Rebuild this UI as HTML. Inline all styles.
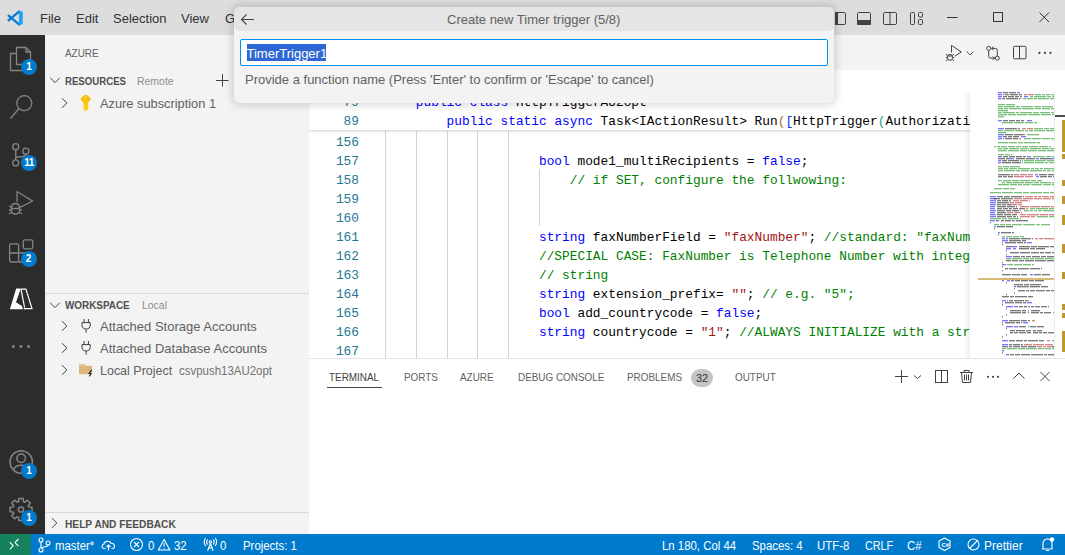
<!DOCTYPE html>
<html><head><meta charset="utf-8">
<style>
*{margin:0;padding:0;box-sizing:border-box}
html,body{width:1065px;height:555px;overflow:hidden;background:#fff;font-family:"Liberation Sans",sans-serif;font-size:13px;color:#616161}
.a{position:absolute;white-space:pre}
svg.a{overflow:visible}
#title{left:0;top:0;width:1065px;height:35px;background:#dddddd}
#act{left:0;top:35px;width:45px;height:499px;background:#2c2c2c}
#side{left:45px;top:35px;width:264px;height:499px;background:#f3f3f3}
#tabs{left:309px;top:35px;width:756px;height:35px;background:#f3f3f3}
#status{left:0;top:534px;width:1065px;height:21px;background:#007acc}
#remote{left:0;top:534px;width:31px;height:21px;background:#16825d}
.menu{top:11px;font-size:13px;color:#333;line-height:15px}
.mono{font-family:"Liberation Mono",monospace;font-size:12.833px;line-height:19px}
.ln{color:#237893;text-align:right;width:50px;left:309px}
.code{left:385px}
.kw{color:#0000ff}
.cm{color:#008000}
.st{color:#a31515}
.id{color:#000}
.br0{color:#a9740f}
.br{color:#0431fa}
.br2{color:#319c8c}
.g{position:absolute;width:1px;background:#d3d3d3}
.badge{position:absolute;width:16px;height:16px;border-radius:8px;background:#007acc;color:#fff;font-size:10px;font-weight:bold;text-align:center;line-height:16px}
.sb{color:#fff;font-size:12px;top:539px;line-height:14px;transform:scaleX(0.95);transform-origin:0 0}
.ptab{top:371px;font-size:11px;color:#616161;line-height:13px;transform:scaleX(0.9);transform-origin:0 0}
.sec{font-size:11px;font-weight:bold;color:#4f4f4f;line-height:13px;transform:scaleX(0.9);transform-origin:0 0}
.desc{font-size:11px;color:#8e8e8e;line-height:13px;transform:scaleX(0.95);transform-origin:0 0}
.item{font-size:13px;color:#616161;line-height:15px}
</style></head><body>
<div class="a" id="title"></div>
<div class="a" id="act"></div>
<div class="a" id="side"></div>
<div class="a" id="tabs"></div>
<div class="a" id="status"></div>
<div class="a" id="remote"></div>

<!-- ===== title bar ===== -->
<svg class="a" style="left:4px;top:7px" width="24" height="22">
<g stroke="#0b7bd3" stroke-width="2.3" stroke-linecap="butt">
<line x1="3.9" y1="8.2" x2="15.6" y2="17.9"/>
<line x1="3.9" y1="13.8" x2="15.6" y2="4.1"/>
</g>
<path d="M14.9 3.2 L18.8 4.9 V16.9 L14.9 18.7 Z" fill="#23a4f2"/>
</svg>
<div class="a menu" style="left:40px">File</div>
<div class="a menu" style="left:76px">Edit</div>
<div class="a menu" style="left:113px">Selection</div>
<div class="a menu" style="left:181px">View</div>
<div class="a menu" style="left:225px">G</div>

<!-- layout controls -->
<svg class="a" style="left:829px;top:11px" width="100" height="16">
 <g fill="none" stroke="#424242" stroke-width="1">
  <rect x="6.5" y="1.5" width="10" height="12" rx="1.2"/>
  <rect x="28.5" y="1.5" width="13" height="12" rx="1.2"/>
  <rect x="54.5" y="1.5" width="13" height="12" rx="1.2"/><line x1="61" y1="1.5" x2="61" y2="13.5"/>
  <rect x="81.5" y="1.5" width="4" height="12" rx="1"/><rect x="89.5" y="1.5" width="4" height="4.5" rx="1"/><rect x="89.5" y="8.5" width="4" height="5" rx="1"/>
 </g>
 <rect x="6" y="1" width="3" height="13" fill="#424242"/>
 <rect x="28" y="9" width="14" height="5" rx="1" fill="#424242"/>
</svg>
<!-- window controls -->
<svg class="a" style="left:940px;top:8px" width="125" height="20">
 <g fill="none" stroke="#333" stroke-width="1">
  <line x1="7" y1="9.5" x2="17.5" y2="9.5"/>
  <rect x="53.5" y="4.5" width="9" height="9"/>
  <line x1="99.5" y1="4.5" x2="109" y2="14"/><line x1="109" y1="4.5" x2="99.5" y2="14"/>
 </g>
</svg>

<!-- ===== activity bar ===== -->
<svg class="a" style="left:0;top:35px" width="45" height="499">
 <g fill="none" stroke="#858585" stroke-width="1.3">
  <!-- explorer -->
  <path d="M16.5 12.5 H26 L30.5 17 V29.5 H16.5 Z M26 12.5 V17 H30.5"/>
  <path d="M16.5 18.5 H10.5 V35.5 H24.5 V29.5"/>
  <!-- search -->
  <circle cx="24.3" cy="68.2" r="7.5"/>
  <line x1="19" y1="73.5" x2="10.5" y2="83.5"/>
  <!-- scm -->
  <circle cx="15.7" cy="111.7" r="3"/><circle cx="25.9" cy="116.2" r="3"/><circle cx="15.7" cy="127.9" r="3"/>
  <line x1="15.7" y1="114.7" x2="15.7" y2="124.9"/>
  <path d="M25.9 119.2 C25.9 122 22 122 15.7 122"/>
  <!-- run -->
  <path d="M17 156.5 L32.4 166 L21 172"/><line x1="17" y1="156.5" x2="17" y2="167"/>
  <path d="M11.5 173 C11.5 167 19.5 167 19.5 173 V176 C19.5 180 11.5 180 11.5 176 Z"/>
  <path d="M9 171 L11.5 172.5 M22 171 L19.5 172.5 M9 175 H11.5 M19.5 175 H22 M9 179 L11.5 177.5 M22 179 L19.5 177.5 M11.5 173.5 H19.5"/>
  <!-- extensions -->
  <rect x="9.6" y="208.8" width="9" height="18.2" rx="1.5"/>
  <path d="M9.6 218 H27.5 V227 H18.6"/>
  <rect x="23.3" y="204.8" width="9.5" height="9" rx="1.5"/>
  <!-- account -->
  <circle stroke-width="1.5" cx="21.2" cy="427" r="11.2"/>
  <circle stroke-width="1.5" cx="21.2" cy="423.3" r="4.3"/>
  <path stroke-width="1.5" d="M13.6 434.8 C15.5 428.8 26.9 428.8 28.8 434.8"/>
  <!-- gear -->
  <path stroke-width="1.5" stroke-linejoin="round" d="M18.58 466.67 L18.77 463.52 L23.23 463.52 L23.42 466.67 L24.83 467.25 L27.19 465.16 L30.34 468.31 L28.25 470.67 L28.83 472.08 L31.98 472.27 L31.98 476.73 L28.83 476.92 L28.25 478.33 L30.34 480.69 L27.19 483.84 L24.83 481.75 L23.42 482.33 L23.23 485.48 L18.77 485.48 L18.58 482.33 L17.17 481.75 L14.81 483.84 L11.66 480.69 L13.75 478.33 L13.17 476.92 L10.02 476.73 L10.02 472.27 L13.17 472.08 L13.75 470.67 L11.66 468.31 L14.81 465.16 L17.17 467.25 Z"/>
  <circle stroke-width="1.5" cx="21" cy="474.5" r="2.6"/>
 </g>
 <!-- azure -->
 <path d="M9.9 274.2 L16.2 253.5 L20.8 253.5 L16 267.2 L21.8 271 L23 274.2 Z" fill="#fff"/>
 <path d="M21 254.1 L25.9 254.1 L32 273.6 L23.8 273.6 M21 254.1 L24.6 272.5" fill="none" stroke="#fff" stroke-width="1.2"/>
 <!-- more -->
 <g fill="#858585"><circle cx="13.3" cy="311.5" r="1.5"/><circle cx="21" cy="311.5" r="1.5"/><circle cx="28.6" cy="311.5" r="1.5"/></g>
</svg>
<div class="badge" style="left:21px;top:23px;top:58.5px">1</div>
<div class="badge" style="left:21px;top:155px;letter-spacing:-0.6px">11</div>
<div class="badge" style="left:20.5px;top:251px">2</div>
<div class="badge" style="left:21px;top:462.5px">1</div>
<div class="badge" style="left:21px;top:510px">1</div>

<!-- ===== sidebar ===== -->
<div class="a" style="left:65px;top:47px;font-size:11px;color:#616161;line-height:13px;transform:scaleX(0.9);transform-origin:0 0">AZURE</div>
<svg class="a" style="left:49px;top:74px" width="12" height="12"><path d="M1.2 3.8 L6 8.6 L10.8 3.8" fill="none" stroke="#424242" stroke-width="1"/></svg>
<div class="a sec" style="left:65px;top:75px;transform:scaleX(0.875)">RESOURCES</div>
<div class="a desc" style="left:137px;top:75px">Remote</div>
<svg class="a" style="left:215px;top:73px" width="14" height="14"><path d="M7.5 1 V13.5 M1 7.5 H13.5" fill="none" stroke="#424242" stroke-width="1"/></svg>
<svg class="a" style="left:60px;top:97px" width="10" height="12"><path d="M2 1.2 L6.8 6 L2 10.8" fill="none" stroke="#424242" stroke-width="1"/></svg>
<svg class="a" style="left:78px;top:95px" width="14" height="18"><defs><linearGradient id="kg" x1="0" y1="0" x2="0" y2="1"><stop offset="0" stop-color="#f9b600"/><stop offset="1" stop-color="#ffd21a"/></linearGradient></defs><path d="M6.3 0 H9.1 L12.7 3.4 V4.8 L9.9 7.8 V9.4 L10.9 10.2 L9.9 11 V11.8 L10.9 12.6 L9.9 13.4 V14.8 L7.7 16 L5.6 14.8 V7.8 L2.7 4.8 V3.4 Z" fill="url(#kg)"/><circle cx="7.6" cy="2.4" r="0.9" fill="#fff4c0"/></svg>
<div class="a item" style="left:100px;top:96px;transform:scaleX(0.985);transform-origin:0 0">Azure subscription 1</div>

<div class="a" style="left:45px;top:293px;width:264px;height:1px;background:#d9d9d9"></div>
<svg class="a" style="left:49px;top:299px" width="12" height="12"><path d="M1.2 3.8 L6 8.6 L10.8 3.8" fill="none" stroke="#424242" stroke-width="1"/></svg>
<div class="a sec" style="left:65px;top:299px">WORKSPACE</div>
<div class="a desc" style="left:142px;top:299px">Local</div>

<svg class="a" style="left:60px;top:320px" width="10" height="12"><path d="M2 1.2 L6.8 6 L2 10.8" fill="none" stroke="#424242" stroke-width="1"/></svg>
<svg class="a" style="left:80px;top:318px" width="12" height="16"><path d="M4.1 1 V4.6 M8.4 1 V4.6 M2 4.6 H10.2 V7.6 C10.2 9.8 8.4 11 6.1 11 C3.8 11 2 9.8 2 7.6 Z M6.1 11 V14.6" fill="none" stroke="#3b3b45" stroke-width="1"/></svg>
<div class="a item" style="left:100px;top:319px">Attached Storage Accounts</div>
<svg class="a" style="left:60px;top:342px" width="10" height="12"><path d="M2 1.2 L6.8 6 L2 10.8" fill="none" stroke="#424242" stroke-width="1"/></svg>
<svg class="a" style="left:80px;top:340px" width="12" height="16"><path d="M4.1 1 V4.6 M8.4 1 V4.6 M2 4.6 H10.2 V7.6 C10.2 9.8 8.4 11 6.1 11 C3.8 11 2 9.8 2 7.6 Z M6.1 11 V14.6" fill="none" stroke="#3b3b45" stroke-width="1"/></svg>
<div class="a item" style="left:100px;top:341px">Attached Database Accounts</div>
<svg class="a" style="left:60px;top:364px" width="10" height="12"><path d="M2 1.2 L6.8 6 L2 10.8" fill="none" stroke="#424242" stroke-width="1"/></svg>
<svg class="a" style="left:79px;top:364px" width="16" height="14"><path d="M0 0.2 H6 L7.2 1.8 H13 V10.2 H0 Z" fill="#dcb67a"/><path d="M0.5 1 H5.8 V1.8 H0.5 Z" fill="#ead2a4"/><path d="M9.5 8 H14 V12.5 H9.5 Z" fill="#f3f3f3"/><path d="M12.8 5.8 L10 9.4 H12.2 L10.3 12.4" fill="none" stroke="#2b2b2b" stroke-width="1.2"/></svg>
<div class="a item" style="left:100px;top:363px;transform:scaleX(0.96);transform-origin:0 0">Local Project</div>
<div class="a" style="left:179px;top:364px;font-size:12px;color:#717171;line-height:14px;transform:scaleX(0.955);transform-origin:0 0">csvpush13AU2opt</div>

<div class="a" style="left:45px;top:512px;width:264px;height:1px;background:#d9d9d9"></div>
<svg class="a" style="left:50px;top:517px" width="10" height="12"><path d="M2 1.2 L6.8 6 L2 10.8" fill="none" stroke="#424242" stroke-width="1"/></svg>
<div class="a sec" style="left:65px;top:518px;transform:scaleX(0.925)">HELP AND FEEDBACK</div>

<!-- ===== editor title actions ===== -->
<svg class="a" style="left:940px;top:40px" width="125" height="26">
 <g fill="none" stroke="#424242" stroke-width="1">
  <path d="M11.5 5.3 L21.3 12 L14.8 16.2"/><line x1="11.5" y1="5.3" x2="11.5" y2="12.5"/>
  <ellipse cx="10" cy="17.4" rx="2.6" ry="3"/><path d="M6 14.2 L7.6 15.4 M14 14.2 L12.4 15.4 M5.8 17.6 H7.4 M12.6 17.6 H14.2 M6 20.8 L7.6 19.6 M14 20.8 L12.4 19.6 M7.6 16 H12.4"/>
  <path d="M26.8 11.6 L30.1 14.9 L33.4 11.6"/>
  <circle cx="48.7" cy="8.4" r="2"/><circle cx="57.3" cy="18.1" r="2"/>
  <path d="M48.7 10.4 V16.3 Q48.7 18.1 50.5 18.1 H54.5 M52.8 16.3 L54.6 18.1 L52.8 19.9"/>
  <path d="M57.3 16.1 V10.2 Q57.3 8.4 55.5 8.4 H51.6 M53.4 6.6 L51.6 8.4 L53.4 10.2"/>
  <rect x="73.5" y="6.3" width="12.5" height="12.5" rx="1"/><line x1="79.5" y1="6.3" x2="79.5" y2="18.8"/>
 </g>
 <g fill="#424242"><circle cx="99.4" cy="12.9" r="1.1"/><circle cx="104.9" cy="12.9" r="1.1"/><circle cx="110.4" cy="12.9" r="1.1"/></g>
</svg>

<!-- ===== editor ===== -->
<div class="g" style="left:385px;top:130px;height:228px"></div>
<div class="g" style="left:416px;top:130px;height:228px"></div>
<div class="g" style="left:447px;top:130px;height:228px"></div>
<div class="g" style="left:477px;top:130px;height:228px"></div>
<div class="g" style="left:508px;top:130px;height:228px"></div>
<div class="g" style="left:539px;top:169px;height:57px"></div>
<div class="a mono ln" style="top:133px">156</div><div class="a mono code" style="top:133px;width:585px;height:19px;overflow:hidden"></div>
<div class="a mono ln" style="top:152px">157</div><div class="a mono code" style="top:152px;width:585px;height:19px;overflow:hidden"><span class="id">                    </span><span class="kw">bool</span><span class="id"> mode1_multiRecipients = </span><span class="kw">false</span><span class="id">;</span></div>
<div class="a mono ln" style="top:171px">158</div><div class="a mono code" style="top:171px;width:585px;height:19px;overflow:hidden"><span class="id">                        </span><span class="cm">// if SET, configure the follwowing:</span></div>
<div class="a mono ln" style="top:190px">159</div><div class="a mono code" style="top:190px;width:585px;height:19px;overflow:hidden"></div>
<div class="a mono ln" style="top:209px">160</div><div class="a mono code" style="top:209px;width:585px;height:19px;overflow:hidden"></div>
<div class="a mono ln" style="top:228px">161</div><div class="a mono code" style="top:228px;width:585px;height:19px;overflow:hidden"><span class="id">                    </span><span class="kw">string</span><span class="id"> faxNumberField = </span><span class="st">&quot;faxNumber&quot;</span><span class="id">; </span><span class="cm">//standard: &quot;faxNumber&quot;</span></div>
<div class="a mono ln" style="top:247px">162</div><div class="a mono code" style="top:247px;width:585px;height:19px;overflow:hidden"><span class="id">                    </span><span class="cm">//SPECIAL CASE: FaxNumber is Telephone Number with integer</span></div>
<div class="a mono ln" style="top:266px">163</div><div class="a mono code" style="top:266px;width:585px;height:19px;overflow:hidden"><span class="id">                    </span><span class="cm">// string</span></div>
<div class="a mono ln" style="top:285px">164</div><div class="a mono code" style="top:285px;width:585px;height:19px;overflow:hidden"><span class="id">                    </span><span class="kw">string</span><span class="id"> extension_prefix= </span><span class="st">&quot;&quot;</span><span class="id">; </span><span class="cm">// e.g. &quot;5&quot;;</span></div>
<div class="a mono ln" style="top:304px">165</div><div class="a mono code" style="top:304px;width:585px;height:19px;overflow:hidden"><span class="id">                    </span><span class="kw">bool</span><span class="id"> add_countrycode = </span><span class="kw">false</span><span class="id">;</span></div>
<div class="a mono ln" style="top:323px">166</div><div class="a mono code" style="top:323px;width:585px;height:19px;overflow:hidden"><span class="id">                    </span><span class="kw">string</span><span class="id"> countrycode = </span><span class="st">&quot;1&quot;</span><span class="id">; </span><span class="cm">//ALWAYS INITIALIZE with a string</span></div>
<div class="a mono ln" style="top:342px">167</div><div class="a mono code" style="top:342px;width:585px;height:19px;overflow:hidden"></div>
<div class="a" style="left:309px;top:92px;width:661px;height:38px;background:#fff;box-shadow:0 3px 2px -1px rgba(0,0,0,0.10)"></div>
<div class="a" style="left:309px;top:130px;width:661px;height:1px;background:#dedede"></div>
<div class="a mono ln" style="top:93px">79</div><div class="a mono code" style="top:93px;width:585px;height:19px;overflow:hidden"><span class="id">    </span><span class="kw">public</span><span class="id"> </span><span class="kw">class</span><span class="id"> HttpTriggerAU2opt</span></div>
<div class="a mono ln" style="top:112px">89</div><div class="a mono code" style="top:112px;width:585px;height:19px;overflow:hidden"><span class="id">        </span><span class="kw">public</span><span class="id"> </span><span class="kw">static</span><span class="id"> </span><span class="kw">async</span><span class="id"> Task&lt;IActionResult&gt; Run</span><span class="br0">(</span><span class="br">[</span><span class="id">HttpTrigger</span><span class="br2">(</span><span class="id">AuthorizationLevel</span></div>
<div class="a" style="left:963px;top:92px;width:7px;height:266px;background:linear-gradient(to right,rgba(0,0,0,0),rgba(0,0,0,0.06))"></div>
<svg class="a" style="left:975px;top:92px" width="80" height="266" shape-rendering="crispEdges"><defs><pattern id="tx" width="2" height="2" patternUnits="userSpaceOnUse"><rect x="1" y="0" width="1" height="2" fill="#fff" fill-opacity="0.35"/><rect x="0" y="1" width="2" height="1" fill="#fff" fill-opacity="0.2"/></pattern></defs><rect x="23" y="0" width="4" height="1" fill="#2020ff" fill-opacity="0.60"/><rect x="23" y="1" width="4" height="1" fill="#2020ff" fill-opacity="0.21"/><rect x="28" y="0" width="5" height="1" fill="#202020" fill-opacity="0.60"/><rect x="28" y="1" width="5" height="1" fill="#202020" fill-opacity="0.21"/><rect x="34" y="0" width="7" height="1" fill="#202020" fill-opacity="0.60"/><rect x="34" y="1" width="7" height="1" fill="#202020" fill-opacity="0.21"/><rect x="42" y="0" width="3" height="1" fill="#2020ff" fill-opacity="0.60"/><rect x="42" y="1" width="3" height="1" fill="#2020ff" fill-opacity="0.21"/><rect x="23" y="2" width="4" height="1" fill="#2020ff" fill-opacity="0.60"/><rect x="23" y="3" width="4" height="1" fill="#2020ff" fill-opacity="0.21"/><rect x="28" y="2" width="1" height="1" fill="#2020ff" fill-opacity="0.60"/><rect x="28" y="3" width="1" height="1" fill="#2020ff" fill-opacity="0.21"/><rect x="30" y="2" width="4" height="1" fill="#202020" fill-opacity="0.60"/><rect x="30" y="3" width="4" height="1" fill="#202020" fill-opacity="0.21"/><rect x="35" y="2" width="8" height="1" fill="#202020" fill-opacity="0.60"/><rect x="35" y="3" width="8" height="1" fill="#202020" fill-opacity="0.21"/><rect x="44" y="2" width="3" height="1" fill="#202020" fill-opacity="0.60"/><rect x="44" y="3" width="3" height="1" fill="#202020" fill-opacity="0.21"/><rect x="49" y="2" width="3" height="1" fill="#b02020" fill-opacity="0.55"/><rect x="49" y="3" width="3" height="1" fill="#b02020" fill-opacity="0.19"/><rect x="53" y="2" width="6" height="1" fill="#b02020" fill-opacity="0.55"/><rect x="53" y="3" width="6" height="1" fill="#b02020" fill-opacity="0.19"/><rect x="60" y="2" width="6" height="1" fill="#108a10" fill-opacity="0.55"/><rect x="60" y="3" width="6" height="1" fill="#108a10" fill-opacity="0.19"/><rect x="67" y="2" width="3" height="1" fill="#108a10" fill-opacity="0.55"/><rect x="67" y="3" width="3" height="1" fill="#108a10" fill-opacity="0.19"/><rect x="71" y="2" width="4" height="1" fill="#108a10" fill-opacity="0.55"/><rect x="71" y="3" width="4" height="1" fill="#108a10" fill-opacity="0.19"/><rect x="76" y="2" width="3" height="1" fill="#108a10" fill-opacity="0.55"/><rect x="76" y="3" width="3" height="1" fill="#108a10" fill-opacity="0.19"/><rect x="23" y="4" width="4" height="1" fill="#2020ff" fill-opacity="0.60"/><rect x="23" y="5" width="4" height="1" fill="#2020ff" fill-opacity="0.21"/><rect x="28" y="4" width="4" height="1" fill="#202020" fill-opacity="0.60"/><rect x="28" y="5" width="4" height="1" fill="#202020" fill-opacity="0.21"/><rect x="33" y="4" width="6" height="1" fill="#202020" fill-opacity="0.60"/><rect x="33" y="5" width="6" height="1" fill="#202020" fill-opacity="0.21"/><rect x="40" y="4" width="4" height="1" fill="#202020" fill-opacity="0.60"/><rect x="40" y="5" width="4" height="1" fill="#202020" fill-opacity="0.21"/><rect x="45" y="4" width="2" height="1" fill="#202020" fill-opacity="0.60"/><rect x="45" y="5" width="2" height="1" fill="#202020" fill-opacity="0.21"/><rect x="49" y="4" width="4" height="1" fill="#2020ff" fill-opacity="0.60"/><rect x="49" y="5" width="4" height="1" fill="#2020ff" fill-opacity="0.21"/><rect x="55" y="4" width="3" height="1" fill="#108a10" fill-opacity="0.55"/><rect x="55" y="5" width="3" height="1" fill="#108a10" fill-opacity="0.19"/><rect x="59" y="4" width="12" height="1" fill="#108a10" fill-opacity="0.55"/><rect x="59" y="5" width="12" height="1" fill="#108a10" fill-opacity="0.19"/><rect x="72" y="4" width="4" height="1" fill="#108a10" fill-opacity="0.55"/><rect x="72" y="5" width="4" height="1" fill="#108a10" fill-opacity="0.19"/><rect x="77" y="4" width="2" height="1" fill="#108a10" fill-opacity="0.55"/><rect x="77" y="5" width="2" height="1" fill="#108a10" fill-opacity="0.19"/><rect x="23" y="6" width="3" height="1" fill="#2020ff" fill-opacity="0.60"/><rect x="23" y="7" width="3" height="1" fill="#2020ff" fill-opacity="0.21"/><rect x="27" y="6" width="3" height="1" fill="#202020" fill-opacity="0.60"/><rect x="27" y="7" width="3" height="1" fill="#202020" fill-opacity="0.21"/><rect x="31" y="6" width="12" height="1" fill="#202020" fill-opacity="0.60"/><rect x="31" y="7" width="12" height="1" fill="#202020" fill-opacity="0.21"/><rect x="44" y="6" width="1" height="1" fill="#202020" fill-opacity="0.60"/><rect x="44" y="7" width="1" height="1" fill="#202020" fill-opacity="0.21"/><rect x="45" y="6" width="1" height="1" fill="#108080" fill-opacity="0.55"/><rect x="45" y="7" width="1" height="1" fill="#108080" fill-opacity="0.19"/><rect x="48" y="6" width="3" height="1" fill="#108a10" fill-opacity="0.55"/><rect x="48" y="7" width="3" height="1" fill="#108a10" fill-opacity="0.19"/><rect x="52" y="6" width="6" height="1" fill="#108a10" fill-opacity="0.55"/><rect x="52" y="7" width="6" height="1" fill="#108a10" fill-opacity="0.19"/><rect x="59" y="6" width="3" height="1" fill="#108a10" fill-opacity="0.55"/><rect x="59" y="7" width="3" height="1" fill="#108a10" fill-opacity="0.19"/><rect x="63" y="6" width="11" height="1" fill="#108a10" fill-opacity="0.55"/><rect x="63" y="7" width="11" height="1" fill="#108a10" fill-opacity="0.19"/><rect x="75" y="6" width="4" height="1" fill="#108a10" fill-opacity="0.55"/><rect x="75" y="7" width="4" height="1" fill="#108a10" fill-opacity="0.19"/><rect x="23" y="12" width="7" height="1" fill="#108a10" fill-opacity="0.55"/><rect x="23" y="13" width="7" height="1" fill="#108a10" fill-opacity="0.19"/><rect x="31" y="12" width="9" height="1" fill="#108a10" fill-opacity="0.55"/><rect x="31" y="13" width="9" height="1" fill="#108a10" fill-opacity="0.19"/><rect x="23" y="14" width="5" height="1" fill="#108a10" fill-opacity="0.55"/><rect x="23" y="15" width="5" height="1" fill="#108a10" fill-opacity="0.19"/><rect x="29" y="14" width="11" height="1" fill="#108a10" fill-opacity="0.55"/><rect x="29" y="15" width="11" height="1" fill="#108a10" fill-opacity="0.19"/><rect x="41" y="14" width="4" height="1" fill="#108a10" fill-opacity="0.55"/><rect x="41" y="15" width="4" height="1" fill="#108a10" fill-opacity="0.19"/><rect x="46" y="14" width="12" height="1" fill="#108a10" fill-opacity="0.55"/><rect x="46" y="15" width="12" height="1" fill="#108a10" fill-opacity="0.19"/><rect x="59" y="14" width="7" height="1" fill="#108a10" fill-opacity="0.55"/><rect x="59" y="15" width="7" height="1" fill="#108a10" fill-opacity="0.19"/><rect x="67" y="14" width="11" height="1" fill="#108a10" fill-opacity="0.55"/><rect x="67" y="15" width="11" height="1" fill="#108a10" fill-opacity="0.19"/><rect x="23" y="16" width="5" height="1" fill="#108a10" fill-opacity="0.55"/><rect x="23" y="17" width="5" height="1" fill="#108a10" fill-opacity="0.19"/><rect x="29" y="16" width="4" height="1" fill="#108a10" fill-opacity="0.55"/><rect x="29" y="17" width="4" height="1" fill="#108a10" fill-opacity="0.19"/><rect x="34" y="16" width="12" height="1" fill="#108a10" fill-opacity="0.55"/><rect x="34" y="17" width="12" height="1" fill="#108a10" fill-opacity="0.19"/><rect x="47" y="16" width="12" height="1" fill="#108a10" fill-opacity="0.55"/><rect x="47" y="17" width="12" height="1" fill="#108a10" fill-opacity="0.19"/><rect x="60" y="16" width="6" height="1" fill="#108a10" fill-opacity="0.55"/><rect x="60" y="17" width="6" height="1" fill="#108a10" fill-opacity="0.19"/><rect x="67" y="16" width="8" height="1" fill="#108a10" fill-opacity="0.55"/><rect x="67" y="17" width="8" height="1" fill="#108a10" fill-opacity="0.19"/><rect x="76" y="16" width="3" height="1" fill="#108a10" fill-opacity="0.55"/><rect x="76" y="17" width="3" height="1" fill="#108a10" fill-opacity="0.19"/><rect x="23" y="18" width="10" height="1" fill="#108a10" fill-opacity="0.55"/><rect x="23" y="19" width="10" height="1" fill="#108a10" fill-opacity="0.19"/><rect x="23" y="20" width="4" height="1" fill="#108a10" fill-opacity="0.55"/><rect x="23" y="21" width="4" height="1" fill="#108a10" fill-opacity="0.19"/><rect x="28" y="20" width="12" height="1" fill="#108a10" fill-opacity="0.55"/><rect x="28" y="21" width="12" height="1" fill="#108a10" fill-opacity="0.19"/><rect x="41" y="20" width="3" height="1" fill="#108a10" fill-opacity="0.55"/><rect x="41" y="21" width="3" height="1" fill="#108a10" fill-opacity="0.19"/><rect x="45" y="20" width="12" height="1" fill="#108a10" fill-opacity="0.55"/><rect x="45" y="21" width="12" height="1" fill="#108a10" fill-opacity="0.19"/><rect x="58" y="20" width="6" height="1" fill="#108a10" fill-opacity="0.55"/><rect x="58" y="21" width="6" height="1" fill="#108a10" fill-opacity="0.19"/><rect x="65" y="20" width="10" height="1" fill="#108a10" fill-opacity="0.55"/><rect x="65" y="21" width="10" height="1" fill="#108a10" fill-opacity="0.19"/><rect x="76" y="20" width="3" height="1" fill="#108a10" fill-opacity="0.55"/><rect x="76" y="21" width="3" height="1" fill="#108a10" fill-opacity="0.19"/><rect x="23" y="22" width="9" height="1" fill="#108a10" fill-opacity="0.55"/><rect x="23" y="23" width="9" height="1" fill="#108a10" fill-opacity="0.19"/><rect x="33" y="22" width="8" height="1" fill="#108a10" fill-opacity="0.55"/><rect x="33" y="23" width="8" height="1" fill="#108a10" fill-opacity="0.19"/><rect x="42" y="22" width="10" height="1" fill="#108a10" fill-opacity="0.55"/><rect x="42" y="23" width="10" height="1" fill="#108a10" fill-opacity="0.19"/><rect x="53" y="22" width="12" height="1" fill="#108a10" fill-opacity="0.55"/><rect x="53" y="23" width="12" height="1" fill="#108a10" fill-opacity="0.19"/><rect x="66" y="22" width="10" height="1" fill="#108a10" fill-opacity="0.55"/><rect x="66" y="23" width="10" height="1" fill="#108a10" fill-opacity="0.19"/><rect x="77" y="22" width="2" height="1" fill="#108a10" fill-opacity="0.55"/><rect x="77" y="23" width="2" height="1" fill="#108a10" fill-opacity="0.19"/><rect x="23" y="24" width="6" height="1" fill="#108a10" fill-opacity="0.55"/><rect x="23" y="25" width="6" height="1" fill="#108a10" fill-opacity="0.19"/><rect x="23" y="28" width="4" height="1" fill="#2020ff" fill-opacity="0.60"/><rect x="23" y="29" width="4" height="1" fill="#2020ff" fill-opacity="0.21"/><rect x="28" y="28" width="5" height="1" fill="#202020" fill-opacity="0.60"/><rect x="28" y="29" width="5" height="1" fill="#202020" fill-opacity="0.21"/><rect x="34" y="28" width="6" height="1" fill="#202020" fill-opacity="0.60"/><rect x="34" y="29" width="6" height="1" fill="#202020" fill-opacity="0.21"/><rect x="41" y="28" width="4" height="1" fill="#202020" fill-opacity="0.60"/><rect x="41" y="29" width="4" height="1" fill="#202020" fill-opacity="0.21"/><rect x="46" y="28" width="3" height="1" fill="#202020" fill-opacity="0.60"/><rect x="46" y="29" width="3" height="1" fill="#202020" fill-opacity="0.21"/><rect x="52" y="28" width="5" height="1" fill="#2020ff" fill-opacity="0.60"/><rect x="52" y="29" width="5" height="1" fill="#2020ff" fill-opacity="0.21"/><rect x="27" y="30" width="11" height="1" fill="#108a10" fill-opacity="0.55"/><rect x="27" y="31" width="11" height="1" fill="#108a10" fill-opacity="0.19"/><rect x="39" y="30" width="10" height="1" fill="#108a10" fill-opacity="0.55"/><rect x="39" y="31" width="10" height="1" fill="#108a10" fill-opacity="0.19"/><rect x="50" y="30" width="8" height="1" fill="#108a10" fill-opacity="0.55"/><rect x="50" y="31" width="8" height="1" fill="#108a10" fill-opacity="0.19"/><rect x="59" y="30" width="3" height="1" fill="#108a10" fill-opacity="0.55"/><rect x="59" y="31" width="3" height="1" fill="#108a10" fill-opacity="0.19"/><rect x="23" y="36" width="6" height="1" fill="#2020ff" fill-opacity="0.60"/><rect x="23" y="37" width="6" height="1" fill="#2020ff" fill-opacity="0.21"/><rect x="30" y="36" width="12" height="1" fill="#202020" fill-opacity="0.60"/><rect x="30" y="37" width="12" height="1" fill="#202020" fill-opacity="0.21"/><rect x="43" y="36" width="2" height="1" fill="#202020" fill-opacity="0.60"/><rect x="43" y="37" width="2" height="1" fill="#202020" fill-opacity="0.21"/><rect x="47" y="36" width="4" height="1" fill="#b02020" fill-opacity="0.55"/><rect x="47" y="37" width="4" height="1" fill="#b02020" fill-opacity="0.19"/><rect x="52" y="36" width="6" height="1" fill="#b02020" fill-opacity="0.55"/><rect x="52" y="37" width="6" height="1" fill="#b02020" fill-opacity="0.19"/><rect x="59" y="36" width="9" height="1" fill="#108a10" fill-opacity="0.55"/><rect x="59" y="37" width="9" height="1" fill="#108a10" fill-opacity="0.19"/><rect x="69" y="36" width="5" height="1" fill="#108a10" fill-opacity="0.55"/><rect x="69" y="37" width="5" height="1" fill="#108a10" fill-opacity="0.19"/><rect x="75" y="36" width="4" height="1" fill="#108a10" fill-opacity="0.55"/><rect x="75" y="37" width="4" height="1" fill="#108a10" fill-opacity="0.19"/><rect x="23" y="38" width="5" height="1" fill="#108a10" fill-opacity="0.55"/><rect x="23" y="39" width="5" height="1" fill="#108a10" fill-opacity="0.19"/><rect x="29" y="38" width="10" height="1" fill="#108a10" fill-opacity="0.55"/><rect x="29" y="39" width="10" height="1" fill="#108a10" fill-opacity="0.19"/><rect x="40" y="38" width="9" height="1" fill="#108a10" fill-opacity="0.55"/><rect x="40" y="39" width="9" height="1" fill="#108a10" fill-opacity="0.19"/><rect x="50" y="38" width="3" height="1" fill="#108a10" fill-opacity="0.55"/><rect x="50" y="39" width="3" height="1" fill="#108a10" fill-opacity="0.19"/><rect x="54" y="38" width="4" height="1" fill="#108a10" fill-opacity="0.55"/><rect x="54" y="39" width="4" height="1" fill="#108a10" fill-opacity="0.19"/><rect x="59" y="38" width="11" height="1" fill="#108a10" fill-opacity="0.55"/><rect x="59" y="39" width="11" height="1" fill="#108a10" fill-opacity="0.19"/><rect x="71" y="38" width="8" height="1" fill="#108a10" fill-opacity="0.55"/><rect x="71" y="39" width="8" height="1" fill="#108a10" fill-opacity="0.19"/><rect x="23" y="40" width="8" height="1" fill="#108a10" fill-opacity="0.55"/><rect x="23" y="41" width="8" height="1" fill="#108a10" fill-opacity="0.19"/><rect x="23" y="42" width="6" height="1" fill="#2020ff" fill-opacity="0.60"/><rect x="23" y="43" width="6" height="1" fill="#2020ff" fill-opacity="0.21"/><rect x="30" y="42" width="8" height="1" fill="#202020" fill-opacity="0.60"/><rect x="30" y="43" width="8" height="1" fill="#202020" fill-opacity="0.21"/><rect x="39" y="42" width="9" height="1" fill="#202020" fill-opacity="0.60"/><rect x="39" y="43" width="9" height="1" fill="#202020" fill-opacity="0.21"/><rect x="48" y="42" width="2" height="1" fill="#b02020" fill-opacity="0.55"/><rect x="48" y="43" width="2" height="1" fill="#b02020" fill-opacity="0.19"/><rect x="52" y="42" width="12" height="1" fill="#108a10" fill-opacity="0.55"/><rect x="52" y="43" width="12" height="1" fill="#108a10" fill-opacity="0.19"/><rect x="23" y="44" width="4" height="1" fill="#2020ff" fill-opacity="0.60"/><rect x="23" y="45" width="4" height="1" fill="#2020ff" fill-opacity="0.21"/><rect x="28" y="44" width="4" height="1" fill="#202020" fill-opacity="0.60"/><rect x="28" y="45" width="4" height="1" fill="#202020" fill-opacity="0.21"/><rect x="33" y="44" width="4" height="1" fill="#202020" fill-opacity="0.60"/><rect x="33" y="45" width="4" height="1" fill="#202020" fill-opacity="0.21"/><rect x="38" y="44" width="6" height="1" fill="#202020" fill-opacity="0.60"/><rect x="38" y="45" width="6" height="1" fill="#202020" fill-opacity="0.21"/><rect x="46" y="44" width="5" height="1" fill="#2020ff" fill-opacity="0.60"/><rect x="46" y="45" width="5" height="1" fill="#2020ff" fill-opacity="0.21"/><rect x="23" y="46" width="4" height="1" fill="#2020ff" fill-opacity="0.60"/><rect x="23" y="47" width="4" height="1" fill="#2020ff" fill-opacity="0.21"/><rect x="28" y="46" width="1" height="1" fill="#2020ff" fill-opacity="0.60"/><rect x="28" y="47" width="1" height="1" fill="#2020ff" fill-opacity="0.21"/><rect x="30" y="46" width="7" height="1" fill="#202020" fill-opacity="0.60"/><rect x="30" y="47" width="7" height="1" fill="#202020" fill-opacity="0.21"/><rect x="38" y="46" width="5" height="1" fill="#202020" fill-opacity="0.60"/><rect x="38" y="47" width="5" height="1" fill="#202020" fill-opacity="0.21"/><rect x="44" y="46" width="2" height="1" fill="#b02020" fill-opacity="0.55"/><rect x="44" y="47" width="2" height="1" fill="#b02020" fill-opacity="0.19"/><rect x="49" y="46" width="7" height="1" fill="#108a10" fill-opacity="0.55"/><rect x="49" y="47" width="7" height="1" fill="#108a10" fill-opacity="0.19"/><rect x="57" y="46" width="9" height="1" fill="#108a10" fill-opacity="0.55"/><rect x="57" y="47" width="9" height="1" fill="#108a10" fill-opacity="0.19"/><rect x="67" y="46" width="8" height="1" fill="#108a10" fill-opacity="0.55"/><rect x="67" y="47" width="8" height="1" fill="#108a10" fill-opacity="0.19"/><rect x="76" y="46" width="3" height="1" fill="#108a10" fill-opacity="0.55"/><rect x="76" y="47" width="3" height="1" fill="#108a10" fill-opacity="0.19"/><rect x="23" y="50" width="10" height="1" fill="#108a10" fill-opacity="0.55"/><rect x="23" y="51" width="10" height="1" fill="#108a10" fill-opacity="0.19"/><rect x="34" y="50" width="8" height="1" fill="#108a10" fill-opacity="0.55"/><rect x="34" y="51" width="8" height="1" fill="#108a10" fill-opacity="0.19"/><rect x="43" y="50" width="5" height="1" fill="#108a10" fill-opacity="0.55"/><rect x="43" y="51" width="5" height="1" fill="#108a10" fill-opacity="0.19"/><rect x="49" y="50" width="12" height="1" fill="#108a10" fill-opacity="0.55"/><rect x="49" y="51" width="12" height="1" fill="#108a10" fill-opacity="0.19"/><rect x="62" y="50" width="3" height="1" fill="#108a10" fill-opacity="0.55"/><rect x="62" y="51" width="3" height="1" fill="#108a10" fill-opacity="0.19"/><rect x="19" y="54" width="2" height="1" fill="#108a10" fill-opacity="0.55"/><rect x="19" y="55" width="2" height="1" fill="#108a10" fill-opacity="0.19"/><rect x="22" y="54" width="3" height="1" fill="#108a10" fill-opacity="0.55"/><rect x="22" y="55" width="3" height="1" fill="#108a10" fill-opacity="0.19"/><rect x="26" y="54" width="6" height="1" fill="#108a10" fill-opacity="0.55"/><rect x="26" y="55" width="6" height="1" fill="#108a10" fill-opacity="0.19"/><rect x="33" y="54" width="7" height="1" fill="#108a10" fill-opacity="0.55"/><rect x="33" y="55" width="7" height="1" fill="#108a10" fill-opacity="0.19"/><rect x="41" y="54" width="5" height="1" fill="#108a10" fill-opacity="0.55"/><rect x="41" y="55" width="5" height="1" fill="#108a10" fill-opacity="0.19"/><rect x="47" y="54" width="6" height="1" fill="#108a10" fill-opacity="0.55"/><rect x="47" y="55" width="6" height="1" fill="#108a10" fill-opacity="0.19"/><rect x="54" y="54" width="9" height="1" fill="#108a10" fill-opacity="0.55"/><rect x="54" y="55" width="9" height="1" fill="#108a10" fill-opacity="0.19"/><rect x="64" y="54" width="9" height="1" fill="#108a10" fill-opacity="0.55"/><rect x="64" y="55" width="9" height="1" fill="#108a10" fill-opacity="0.19"/><rect x="74" y="54" width="2" height="1" fill="#108a10" fill-opacity="0.55"/><rect x="74" y="55" width="2" height="1" fill="#108a10" fill-opacity="0.19"/><rect x="23" y="56" width="4" height="1" fill="#108a10" fill-opacity="0.55"/><rect x="23" y="57" width="4" height="1" fill="#108a10" fill-opacity="0.19"/><rect x="28" y="56" width="5" height="1" fill="#108a10" fill-opacity="0.55"/><rect x="28" y="57" width="5" height="1" fill="#108a10" fill-opacity="0.19"/><rect x="34" y="56" width="10" height="1" fill="#108a10" fill-opacity="0.55"/><rect x="34" y="57" width="10" height="1" fill="#108a10" fill-opacity="0.19"/><rect x="45" y="56" width="9" height="1" fill="#108a10" fill-opacity="0.55"/><rect x="45" y="57" width="9" height="1" fill="#108a10" fill-opacity="0.19"/><rect x="55" y="56" width="11" height="1" fill="#108a10" fill-opacity="0.55"/><rect x="55" y="57" width="11" height="1" fill="#108a10" fill-opacity="0.19"/><rect x="67" y="56" width="7" height="1" fill="#108a10" fill-opacity="0.55"/><rect x="67" y="57" width="7" height="1" fill="#108a10" fill-opacity="0.19"/><rect x="75" y="56" width="4" height="1" fill="#108a10" fill-opacity="0.55"/><rect x="75" y="57" width="4" height="1" fill="#108a10" fill-opacity="0.19"/><rect x="23" y="58" width="9" height="1" fill="#108a10" fill-opacity="0.55"/><rect x="23" y="59" width="9" height="1" fill="#108a10" fill-opacity="0.19"/><rect x="33" y="58" width="11" height="1" fill="#108a10" fill-opacity="0.55"/><rect x="33" y="59" width="11" height="1" fill="#108a10" fill-opacity="0.19"/><rect x="45" y="58" width="7" height="1" fill="#108a10" fill-opacity="0.55"/><rect x="45" y="59" width="7" height="1" fill="#108a10" fill-opacity="0.19"/><rect x="53" y="58" width="9" height="1" fill="#108a10" fill-opacity="0.55"/><rect x="53" y="59" width="9" height="1" fill="#108a10" fill-opacity="0.19"/><rect x="63" y="58" width="8" height="1" fill="#108a10" fill-opacity="0.55"/><rect x="63" y="59" width="8" height="1" fill="#108a10" fill-opacity="0.19"/><rect x="72" y="58" width="7" height="1" fill="#108a10" fill-opacity="0.55"/><rect x="72" y="59" width="7" height="1" fill="#108a10" fill-opacity="0.19"/><rect x="23" y="62" width="6" height="1" fill="#108a10" fill-opacity="0.55"/><rect x="23" y="63" width="6" height="1" fill="#108a10" fill-opacity="0.19"/><rect x="30" y="62" width="5" height="1" fill="#108a10" fill-opacity="0.55"/><rect x="30" y="63" width="5" height="1" fill="#108a10" fill-opacity="0.19"/><rect x="36" y="62" width="1" height="1" fill="#108a10" fill-opacity="0.55"/><rect x="36" y="63" width="1" height="1" fill="#108a10" fill-opacity="0.19"/><rect x="23" y="64" width="4" height="1" fill="#2020ff" fill-opacity="0.60"/><rect x="23" y="65" width="4" height="1" fill="#2020ff" fill-opacity="0.21"/><rect x="28" y="64" width="5" height="1" fill="#202020" fill-opacity="0.60"/><rect x="28" y="65" width="5" height="1" fill="#202020" fill-opacity="0.21"/><rect x="34" y="64" width="6" height="1" fill="#202020" fill-opacity="0.60"/><rect x="34" y="65" width="6" height="1" fill="#202020" fill-opacity="0.21"/><rect x="41" y="64" width="6" height="1" fill="#202020" fill-opacity="0.60"/><rect x="41" y="65" width="6" height="1" fill="#202020" fill-opacity="0.21"/><rect x="48" y="64" width="3" height="1" fill="#202020" fill-opacity="0.60"/><rect x="48" y="65" width="3" height="1" fill="#202020" fill-opacity="0.21"/><rect x="52" y="64" width="4" height="1" fill="#2020ff" fill-opacity="0.60"/><rect x="52" y="65" width="4" height="1" fill="#2020ff" fill-opacity="0.21"/><rect x="58" y="64" width="12" height="1" fill="#108a10" fill-opacity="0.55"/><rect x="58" y="65" width="12" height="1" fill="#108a10" fill-opacity="0.19"/><rect x="71" y="64" width="5" height="1" fill="#108a10" fill-opacity="0.55"/><rect x="71" y="65" width="5" height="1" fill="#108a10" fill-opacity="0.19"/><rect x="77" y="64" width="2" height="1" fill="#108a10" fill-opacity="0.55"/><rect x="77" y="65" width="2" height="1" fill="#108a10" fill-opacity="0.19"/><rect x="23" y="66" width="7" height="1" fill="#202020" fill-opacity="0.60"/><rect x="23" y="67" width="7" height="1" fill="#202020" fill-opacity="0.21"/><rect x="31" y="66" width="3" height="1" fill="#202020" fill-opacity="0.60"/><rect x="31" y="67" width="3" height="1" fill="#202020" fill-opacity="0.21"/><rect x="34" y="66" width="5" height="1" fill="#2020ff" fill-opacity="0.60"/><rect x="34" y="67" width="5" height="1" fill="#2020ff" fill-opacity="0.21"/><rect x="41" y="66" width="9" height="1" fill="#202020" fill-opacity="0.60"/><rect x="41" y="67" width="9" height="1" fill="#202020" fill-opacity="0.21"/><rect x="51" y="66" width="9" height="1" fill="#202020" fill-opacity="0.60"/><rect x="51" y="67" width="9" height="1" fill="#202020" fill-opacity="0.21"/><rect x="61" y="66" width="3" height="1" fill="#2020ff" fill-opacity="0.60"/><rect x="61" y="67" width="3" height="1" fill="#2020ff" fill-opacity="0.21"/><rect x="65" y="66" width="11" height="1" fill="#202020" fill-opacity="0.60"/><rect x="65" y="67" width="11" height="1" fill="#202020" fill-opacity="0.21"/><rect x="76" y="66" width="3" height="1" fill="#2020ff" fill-opacity="0.60"/><rect x="76" y="67" width="3" height="1" fill="#2020ff" fill-opacity="0.21"/><rect x="23" y="68" width="3" height="1" fill="#2020ff" fill-opacity="0.60"/><rect x="23" y="69" width="3" height="1" fill="#2020ff" fill-opacity="0.21"/><rect x="27" y="68" width="5" height="1" fill="#202020" fill-opacity="0.60"/><rect x="27" y="69" width="5" height="1" fill="#202020" fill-opacity="0.21"/><rect x="33" y="68" width="11" height="1" fill="#202020" fill-opacity="0.60"/><rect x="33" y="69" width="11" height="1" fill="#202020" fill-opacity="0.21"/><rect x="45" y="68" width="1" height="1" fill="#202020" fill-opacity="0.60"/><rect x="45" y="69" width="1" height="1" fill="#202020" fill-opacity="0.21"/><rect x="47" y="68" width="1" height="1" fill="#108080" fill-opacity="0.55"/><rect x="47" y="69" width="1" height="1" fill="#108080" fill-opacity="0.19"/><rect x="49" y="68" width="10" height="1" fill="#108a10" fill-opacity="0.55"/><rect x="49" y="69" width="10" height="1" fill="#108a10" fill-opacity="0.19"/><rect x="60" y="68" width="11" height="1" fill="#108a10" fill-opacity="0.55"/><rect x="60" y="69" width="11" height="1" fill="#108a10" fill-opacity="0.19"/><rect x="72" y="68" width="7" height="1" fill="#108a10" fill-opacity="0.55"/><rect x="72" y="69" width="7" height="1" fill="#108a10" fill-opacity="0.19"/><rect x="23" y="70" width="3" height="1" fill="#2020ff" fill-opacity="0.60"/><rect x="23" y="71" width="3" height="1" fill="#2020ff" fill-opacity="0.21"/><rect x="27" y="70" width="9" height="1" fill="#202020" fill-opacity="0.60"/><rect x="27" y="71" width="9" height="1" fill="#202020" fill-opacity="0.21"/><rect x="37" y="70" width="9" height="1" fill="#202020" fill-opacity="0.60"/><rect x="37" y="71" width="9" height="1" fill="#202020" fill-opacity="0.21"/><rect x="47" y="70" width="1" height="1" fill="#108080" fill-opacity="0.55"/><rect x="47" y="71" width="1" height="1" fill="#108080" fill-opacity="0.19"/><rect x="49" y="70" width="10" height="1" fill="#108a10" fill-opacity="0.55"/><rect x="49" y="71" width="10" height="1" fill="#108a10" fill-opacity="0.19"/><rect x="60" y="70" width="9" height="1" fill="#108a10" fill-opacity="0.55"/><rect x="60" y="71" width="9" height="1" fill="#108a10" fill-opacity="0.19"/><rect x="70" y="70" width="3" height="1" fill="#108a10" fill-opacity="0.55"/><rect x="70" y="71" width="3" height="1" fill="#108a10" fill-opacity="0.19"/><rect x="74" y="70" width="5" height="1" fill="#108a10" fill-opacity="0.55"/><rect x="74" y="71" width="5" height="1" fill="#108a10" fill-opacity="0.19"/><rect x="23" y="74" width="4" height="1" fill="#108a10" fill-opacity="0.55"/><rect x="23" y="75" width="4" height="1" fill="#108a10" fill-opacity="0.19"/><rect x="28" y="74" width="6" height="1" fill="#108a10" fill-opacity="0.55"/><rect x="28" y="75" width="6" height="1" fill="#108a10" fill-opacity="0.19"/><rect x="35" y="74" width="10" height="1" fill="#108a10" fill-opacity="0.55"/><rect x="35" y="75" width="10" height="1" fill="#108a10" fill-opacity="0.19"/><rect x="23" y="76" width="5" height="1" fill="#108a10" fill-opacity="0.55"/><rect x="23" y="77" width="5" height="1" fill="#108a10" fill-opacity="0.19"/><rect x="29" y="76" width="4" height="1" fill="#108a10" fill-opacity="0.55"/><rect x="29" y="77" width="4" height="1" fill="#108a10" fill-opacity="0.19"/><rect x="34" y="76" width="8" height="1" fill="#108a10" fill-opacity="0.55"/><rect x="34" y="77" width="8" height="1" fill="#108a10" fill-opacity="0.19"/><rect x="43" y="76" width="12" height="1" fill="#108a10" fill-opacity="0.55"/><rect x="43" y="77" width="12" height="1" fill="#108a10" fill-opacity="0.19"/><rect x="56" y="76" width="3" height="1" fill="#108a10" fill-opacity="0.55"/><rect x="56" y="77" width="3" height="1" fill="#108a10" fill-opacity="0.19"/><rect x="60" y="76" width="4" height="1" fill="#108a10" fill-opacity="0.55"/><rect x="60" y="77" width="4" height="1" fill="#108a10" fill-opacity="0.19"/><rect x="65" y="76" width="3" height="1" fill="#108a10" fill-opacity="0.55"/><rect x="65" y="77" width="3" height="1" fill="#108a10" fill-opacity="0.19"/><rect x="69" y="76" width="10" height="1" fill="#108a10" fill-opacity="0.55"/><rect x="69" y="77" width="10" height="1" fill="#108a10" fill-opacity="0.19"/><rect x="23" y="78" width="5" height="1" fill="#108a10" fill-opacity="0.55"/><rect x="23" y="79" width="5" height="1" fill="#108a10" fill-opacity="0.19"/><rect x="29" y="78" width="11" height="1" fill="#108a10" fill-opacity="0.55"/><rect x="29" y="79" width="11" height="1" fill="#108a10" fill-opacity="0.19"/><rect x="41" y="78" width="4" height="1" fill="#108a10" fill-opacity="0.55"/><rect x="41" y="79" width="4" height="1" fill="#108a10" fill-opacity="0.19"/><rect x="46" y="78" width="8" height="1" fill="#108a10" fill-opacity="0.55"/><rect x="46" y="79" width="8" height="1" fill="#108a10" fill-opacity="0.19"/><rect x="55" y="78" width="12" height="1" fill="#108a10" fill-opacity="0.55"/><rect x="55" y="79" width="12" height="1" fill="#108a10" fill-opacity="0.19"/><rect x="68" y="78" width="3" height="1" fill="#108a10" fill-opacity="0.55"/><rect x="68" y="79" width="3" height="1" fill="#108a10" fill-opacity="0.19"/><rect x="72" y="78" width="4" height="1" fill="#108a10" fill-opacity="0.55"/><rect x="72" y="79" width="4" height="1" fill="#108a10" fill-opacity="0.19"/><rect x="77" y="78" width="2" height="1" fill="#108a10" fill-opacity="0.55"/><rect x="77" y="79" width="2" height="1" fill="#108a10" fill-opacity="0.19"/><rect x="23" y="82" width="12" height="1" fill="#202020" fill-opacity="0.60"/><rect x="23" y="83" width="12" height="1" fill="#202020" fill-opacity="0.21"/><rect x="36" y="82" width="2" height="1" fill="#202020" fill-opacity="0.60"/><rect x="36" y="83" width="2" height="1" fill="#202020" fill-opacity="0.21"/><rect x="39" y="82" width="5" height="1" fill="#b02020" fill-opacity="0.55"/><rect x="39" y="83" width="5" height="1" fill="#b02020" fill-opacity="0.19"/><rect x="45" y="82" width="7" height="1" fill="#b02020" fill-opacity="0.55"/><rect x="45" y="83" width="7" height="1" fill="#b02020" fill-opacity="0.19"/><rect x="53" y="82" width="5" height="1" fill="#b02020" fill-opacity="0.55"/><rect x="53" y="83" width="5" height="1" fill="#b02020" fill-opacity="0.19"/><rect x="60" y="82" width="3" height="1" fill="#2020ff" fill-opacity="0.60"/><rect x="60" y="83" width="3" height="1" fill="#2020ff" fill-opacity="0.21"/><rect x="64" y="82" width="8" height="1" fill="#202020" fill-opacity="0.60"/><rect x="64" y="83" width="8" height="1" fill="#202020" fill-opacity="0.21"/><rect x="73" y="82" width="6" height="1" fill="#202020" fill-opacity="0.60"/><rect x="73" y="83" width="6" height="1" fill="#202020" fill-opacity="0.21"/><rect x="23" y="84" width="4" height="1" fill="#202020" fill-opacity="0.60"/><rect x="23" y="85" width="4" height="1" fill="#202020" fill-opacity="0.21"/><rect x="28" y="84" width="4" height="1" fill="#202020" fill-opacity="0.60"/><rect x="28" y="85" width="4" height="1" fill="#202020" fill-opacity="0.21"/><rect x="33" y="84" width="5" height="1" fill="#202020" fill-opacity="0.60"/><rect x="33" y="85" width="5" height="1" fill="#202020" fill-opacity="0.21"/><rect x="39" y="84" width="10" height="1" fill="#b02020" fill-opacity="0.55"/><rect x="39" y="85" width="10" height="1" fill="#b02020" fill-opacity="0.19"/><rect x="50" y="84" width="8" height="1" fill="#b02020" fill-opacity="0.55"/><rect x="50" y="85" width="8" height="1" fill="#b02020" fill-opacity="0.19"/><rect x="61" y="84" width="3" height="1" fill="#2020ff" fill-opacity="0.60"/><rect x="61" y="85" width="3" height="1" fill="#2020ff" fill-opacity="0.21"/><rect x="65" y="84" width="7" height="1" fill="#202020" fill-opacity="0.60"/><rect x="65" y="85" width="7" height="1" fill="#202020" fill-opacity="0.21"/><rect x="73" y="84" width="4" height="1" fill="#202020" fill-opacity="0.60"/><rect x="73" y="85" width="4" height="1" fill="#202020" fill-opacity="0.21"/><rect x="78" y="84" width="1" height="1" fill="#202020" fill-opacity="0.60"/><rect x="78" y="85" width="1" height="1" fill="#202020" fill-opacity="0.21"/><rect x="23" y="88" width="4" height="1" fill="#108a10" fill-opacity="0.55"/><rect x="23" y="89" width="4" height="1" fill="#108a10" fill-opacity="0.19"/><rect x="28" y="88" width="8" height="1" fill="#108a10" fill-opacity="0.55"/><rect x="28" y="89" width="8" height="1" fill="#108a10" fill-opacity="0.19"/><rect x="37" y="88" width="7" height="1" fill="#108a10" fill-opacity="0.55"/><rect x="37" y="89" width="7" height="1" fill="#108a10" fill-opacity="0.19"/><rect x="45" y="88" width="10" height="1" fill="#108a10" fill-opacity="0.55"/><rect x="45" y="89" width="10" height="1" fill="#108a10" fill-opacity="0.19"/><rect x="56" y="88" width="5" height="1" fill="#108a10" fill-opacity="0.55"/><rect x="56" y="89" width="5" height="1" fill="#108a10" fill-opacity="0.19"/><rect x="62" y="88" width="5" height="1" fill="#108a10" fill-opacity="0.55"/><rect x="62" y="89" width="5" height="1" fill="#108a10" fill-opacity="0.19"/><rect x="27" y="90" width="3" height="1" fill="#108a10" fill-opacity="0.55"/><rect x="27" y="91" width="3" height="1" fill="#108a10" fill-opacity="0.19"/><rect x="31" y="90" width="6" height="1" fill="#108a10" fill-opacity="0.55"/><rect x="31" y="91" width="6" height="1" fill="#108a10" fill-opacity="0.19"/><rect x="38" y="90" width="11" height="1" fill="#108a10" fill-opacity="0.55"/><rect x="38" y="91" width="11" height="1" fill="#108a10" fill-opacity="0.19"/><rect x="50" y="90" width="8" height="1" fill="#108a10" fill-opacity="0.55"/><rect x="50" y="91" width="8" height="1" fill="#108a10" fill-opacity="0.19"/><rect x="59" y="90" width="5" height="1" fill="#108a10" fill-opacity="0.55"/><rect x="59" y="91" width="5" height="1" fill="#108a10" fill-opacity="0.19"/><rect x="65" y="90" width="11" height="1" fill="#108a10" fill-opacity="0.55"/><rect x="65" y="91" width="11" height="1" fill="#108a10" fill-opacity="0.19"/><rect x="77" y="90" width="2" height="1" fill="#108a10" fill-opacity="0.55"/><rect x="77" y="91" width="2" height="1" fill="#108a10" fill-opacity="0.19"/><rect x="23" y="92" width="11" height="1" fill="#108a10" fill-opacity="0.55"/><rect x="23" y="93" width="11" height="1" fill="#108a10" fill-opacity="0.19"/><rect x="35" y="92" width="7" height="1" fill="#108a10" fill-opacity="0.55"/><rect x="35" y="93" width="7" height="1" fill="#108a10" fill-opacity="0.19"/><rect x="43" y="92" width="4" height="1" fill="#108a10" fill-opacity="0.55"/><rect x="43" y="93" width="4" height="1" fill="#108a10" fill-opacity="0.19"/><rect x="48" y="92" width="7" height="1" fill="#108a10" fill-opacity="0.55"/><rect x="48" y="93" width="7" height="1" fill="#108a10" fill-opacity="0.19"/><rect x="56" y="92" width="11" height="1" fill="#108a10" fill-opacity="0.55"/><rect x="56" y="93" width="11" height="1" fill="#108a10" fill-opacity="0.19"/><rect x="68" y="92" width="8" height="1" fill="#108a10" fill-opacity="0.55"/><rect x="68" y="93" width="8" height="1" fill="#108a10" fill-opacity="0.19"/><rect x="77" y="92" width="2" height="1" fill="#108a10" fill-opacity="0.55"/><rect x="77" y="93" width="2" height="1" fill="#108a10" fill-opacity="0.19"/><rect x="19" y="96" width="8" height="1" fill="#108a10" fill-opacity="0.55"/><rect x="19" y="97" width="8" height="1" fill="#108a10" fill-opacity="0.19"/><rect x="28" y="96" width="6" height="1" fill="#108a10" fill-opacity="0.55"/><rect x="28" y="97" width="6" height="1" fill="#108a10" fill-opacity="0.19"/><rect x="35" y="96" width="5" height="1" fill="#108a10" fill-opacity="0.55"/><rect x="35" y="97" width="5" height="1" fill="#108a10" fill-opacity="0.19"/><rect x="15" y="100" width="11" height="1" fill="#108a10" fill-opacity="0.55"/><rect x="15" y="101" width="11" height="1" fill="#108a10" fill-opacity="0.19"/><rect x="27" y="100" width="11" height="1" fill="#108a10" fill-opacity="0.55"/><rect x="27" y="101" width="11" height="1" fill="#108a10" fill-opacity="0.19"/><rect x="39" y="100" width="8" height="1" fill="#108a10" fill-opacity="0.55"/><rect x="39" y="101" width="8" height="1" fill="#108a10" fill-opacity="0.19"/><rect x="48" y="100" width="6" height="1" fill="#108a10" fill-opacity="0.55"/><rect x="48" y="101" width="6" height="1" fill="#108a10" fill-opacity="0.19"/><rect x="55" y="100" width="12" height="1" fill="#108a10" fill-opacity="0.55"/><rect x="55" y="101" width="12" height="1" fill="#108a10" fill-opacity="0.19"/><rect x="68" y="100" width="6" height="1" fill="#108a10" fill-opacity="0.55"/><rect x="68" y="101" width="6" height="1" fill="#108a10" fill-opacity="0.19"/><rect x="75" y="100" width="4" height="1" fill="#108a10" fill-opacity="0.55"/><rect x="75" y="101" width="4" height="1" fill="#108a10" fill-opacity="0.19"/><rect x="15" y="104" width="6" height="1" fill="#2020ff" fill-opacity="0.60"/><rect x="15" y="105" width="6" height="1" fill="#2020ff" fill-opacity="0.21"/><rect x="22" y="104" width="6" height="1" fill="#202020" fill-opacity="0.60"/><rect x="22" y="105" width="6" height="1" fill="#202020" fill-opacity="0.21"/><rect x="29" y="104" width="6" height="1" fill="#202020" fill-opacity="0.60"/><rect x="29" y="105" width="6" height="1" fill="#202020" fill-opacity="0.21"/><rect x="36" y="104" width="11" height="1" fill="#202020" fill-opacity="0.60"/><rect x="36" y="105" width="11" height="1" fill="#202020" fill-opacity="0.21"/><rect x="48" y="104" width="1" height="1" fill="#202020" fill-opacity="0.60"/><rect x="48" y="105" width="1" height="1" fill="#202020" fill-opacity="0.21"/><rect x="50" y="104" width="8" height="1" fill="#b02020" fill-opacity="0.55"/><rect x="50" y="105" width="8" height="1" fill="#b02020" fill-opacity="0.19"/><rect x="59" y="104" width="3" height="1" fill="#b02020" fill-opacity="0.55"/><rect x="59" y="105" width="3" height="1" fill="#b02020" fill-opacity="0.19"/><rect x="63" y="104" width="3" height="1" fill="#b02020" fill-opacity="0.55"/><rect x="63" y="105" width="3" height="1" fill="#b02020" fill-opacity="0.19"/><rect x="67" y="104" width="7" height="1" fill="#b02020" fill-opacity="0.55"/><rect x="67" y="105" width="7" height="1" fill="#b02020" fill-opacity="0.19"/><rect x="75" y="104" width="4" height="1" fill="#b02020" fill-opacity="0.55"/><rect x="75" y="105" width="4" height="1" fill="#b02020" fill-opacity="0.19"/><rect x="15" y="106" width="6" height="1" fill="#2020ff" fill-opacity="0.60"/><rect x="15" y="107" width="6" height="1" fill="#2020ff" fill-opacity="0.21"/><rect x="19" y="106" width="6" height="1" fill="#202020" fill-opacity="0.60"/><rect x="19" y="107" width="6" height="1" fill="#202020" fill-opacity="0.21"/><rect x="26" y="106" width="12" height="1" fill="#202020" fill-opacity="0.60"/><rect x="26" y="107" width="12" height="1" fill="#202020" fill-opacity="0.21"/><rect x="39" y="106" width="8" height="1" fill="#b02020" fill-opacity="0.55"/><rect x="39" y="107" width="8" height="1" fill="#b02020" fill-opacity="0.19"/><rect x="48" y="106" width="10" height="1" fill="#b02020" fill-opacity="0.55"/><rect x="48" y="107" width="10" height="1" fill="#b02020" fill-opacity="0.19"/><rect x="59" y="106" width="8" height="1" fill="#b02020" fill-opacity="0.55"/><rect x="59" y="107" width="8" height="1" fill="#b02020" fill-opacity="0.19"/><rect x="68" y="106" width="8" height="1" fill="#b02020" fill-opacity="0.55"/><rect x="68" y="107" width="8" height="1" fill="#b02020" fill-opacity="0.19"/><rect x="77" y="106" width="2" height="1" fill="#b02020" fill-opacity="0.55"/><rect x="77" y="107" width="2" height="1" fill="#b02020" fill-opacity="0.19"/><rect x="15" y="108" width="6" height="1" fill="#2020ff" fill-opacity="0.60"/><rect x="15" y="109" width="6" height="1" fill="#2020ff" fill-opacity="0.21"/><rect x="22" y="108" width="4" height="1" fill="#202020" fill-opacity="0.60"/><rect x="22" y="109" width="4" height="1" fill="#202020" fill-opacity="0.21"/><rect x="27" y="108" width="6" height="1" fill="#202020" fill-opacity="0.60"/><rect x="27" y="109" width="6" height="1" fill="#202020" fill-opacity="0.21"/><rect x="34" y="108" width="2" height="1" fill="#202020" fill-opacity="0.60"/><rect x="34" y="109" width="2" height="1" fill="#202020" fill-opacity="0.21"/><rect x="38" y="108" width="6" height="1" fill="#b02020" fill-opacity="0.55"/><rect x="38" y="109" width="6" height="1" fill="#b02020" fill-opacity="0.19"/><rect x="45" y="108" width="8" height="1" fill="#b02020" fill-opacity="0.55"/><rect x="45" y="109" width="8" height="1" fill="#b02020" fill-opacity="0.19"/><rect x="54" y="108" width="1" height="1" fill="#b02020" fill-opacity="0.55"/><rect x="54" y="109" width="1" height="1" fill="#b02020" fill-opacity="0.19"/><rect x="15" y="110" width="6" height="1" fill="#2020ff" fill-opacity="0.60"/><rect x="15" y="111" width="6" height="1" fill="#2020ff" fill-opacity="0.21"/><rect x="22" y="110" width="12" height="1" fill="#202020" fill-opacity="0.60"/><rect x="22" y="111" width="12" height="1" fill="#202020" fill-opacity="0.21"/><rect x="35" y="110" width="1" height="1" fill="#202020" fill-opacity="0.60"/><rect x="35" y="111" width="1" height="1" fill="#202020" fill-opacity="0.21"/><rect x="36" y="110" width="3" height="1" fill="#b02020" fill-opacity="0.55"/><rect x="36" y="111" width="3" height="1" fill="#b02020" fill-opacity="0.19"/><rect x="40" y="110" width="7" height="1" fill="#b02020" fill-opacity="0.55"/><rect x="40" y="111" width="7" height="1" fill="#b02020" fill-opacity="0.19"/><rect x="15" y="112" width="6" height="1" fill="#2020ff" fill-opacity="0.60"/><rect x="15" y="113" width="6" height="1" fill="#2020ff" fill-opacity="0.21"/><rect x="22" y="112" width="4" height="1" fill="#202020" fill-opacity="0.60"/><rect x="22" y="113" width="4" height="1" fill="#202020" fill-opacity="0.21"/><rect x="27" y="112" width="4" height="1" fill="#202020" fill-opacity="0.60"/><rect x="27" y="113" width="4" height="1" fill="#202020" fill-opacity="0.21"/><rect x="32" y="112" width="4" height="1" fill="#202020" fill-opacity="0.60"/><rect x="32" y="113" width="4" height="1" fill="#202020" fill-opacity="0.21"/><rect x="36" y="112" width="6" height="1" fill="#b02020" fill-opacity="0.55"/><rect x="36" y="113" width="6" height="1" fill="#b02020" fill-opacity="0.19"/><rect x="43" y="112" width="4" height="1" fill="#b02020" fill-opacity="0.55"/><rect x="43" y="113" width="4" height="1" fill="#b02020" fill-opacity="0.19"/><rect x="15" y="114" width="5" height="1" fill="#2020ff" fill-opacity="0.60"/><rect x="15" y="115" width="5" height="1" fill="#2020ff" fill-opacity="0.21"/><rect x="22" y="114" width="9" height="1" fill="#202020" fill-opacity="0.60"/><rect x="22" y="115" width="9" height="1" fill="#202020" fill-opacity="0.21"/><rect x="32" y="114" width="8" height="1" fill="#202020" fill-opacity="0.60"/><rect x="32" y="115" width="8" height="1" fill="#202020" fill-opacity="0.21"/><rect x="41" y="114" width="1" height="1" fill="#202020" fill-opacity="0.60"/><rect x="41" y="115" width="1" height="1" fill="#202020" fill-opacity="0.21"/><rect x="45" y="114" width="9" height="1" fill="#b02020" fill-opacity="0.55"/><rect x="45" y="115" width="9" height="1" fill="#b02020" fill-opacity="0.19"/><rect x="55" y="114" width="10" height="1" fill="#b02020" fill-opacity="0.55"/><rect x="55" y="115" width="10" height="1" fill="#b02020" fill-opacity="0.19"/><rect x="66" y="114" width="9" height="1" fill="#b02020" fill-opacity="0.55"/><rect x="66" y="115" width="9" height="1" fill="#b02020" fill-opacity="0.19"/><rect x="76" y="114" width="3" height="1" fill="#b02020" fill-opacity="0.55"/><rect x="76" y="115" width="3" height="1" fill="#b02020" fill-opacity="0.19"/><rect x="15" y="116" width="5" height="1" fill="#2020ff" fill-opacity="0.60"/><rect x="15" y="117" width="5" height="1" fill="#2020ff" fill-opacity="0.21"/><rect x="22" y="116" width="5" height="1" fill="#202020" fill-opacity="0.60"/><rect x="22" y="117" width="5" height="1" fill="#202020" fill-opacity="0.21"/><rect x="28" y="116" width="5" height="1" fill="#202020" fill-opacity="0.60"/><rect x="28" y="117" width="5" height="1" fill="#202020" fill-opacity="0.21"/><rect x="34" y="116" width="3" height="1" fill="#202020" fill-opacity="0.60"/><rect x="34" y="117" width="3" height="1" fill="#202020" fill-opacity="0.21"/><rect x="38" y="116" width="5" height="1" fill="#202020" fill-opacity="0.60"/><rect x="38" y="117" width="5" height="1" fill="#202020" fill-opacity="0.21"/><rect x="44" y="116" width="6" height="1" fill="#202020" fill-opacity="0.60"/><rect x="44" y="117" width="6" height="1" fill="#202020" fill-opacity="0.21"/><rect x="51" y="116" width="2" height="1" fill="#b02020" fill-opacity="0.55"/><rect x="51" y="117" width="2" height="1" fill="#b02020" fill-opacity="0.19"/><rect x="55" y="116" width="5" height="1" fill="#108a10" fill-opacity="0.55"/><rect x="55" y="117" width="5" height="1" fill="#108a10" fill-opacity="0.19"/><rect x="61" y="116" width="12" height="1" fill="#108a10" fill-opacity="0.55"/><rect x="61" y="117" width="12" height="1" fill="#108a10" fill-opacity="0.19"/><rect x="74" y="116" width="5" height="1" fill="#108a10" fill-opacity="0.55"/><rect x="74" y="117" width="5" height="1" fill="#108a10" fill-opacity="0.19"/><rect x="15" y="118" width="6" height="1" fill="#2020ff" fill-opacity="0.60"/><rect x="15" y="119" width="6" height="1" fill="#2020ff" fill-opacity="0.21"/><rect x="22" y="118" width="8" height="1" fill="#202020" fill-opacity="0.60"/><rect x="22" y="119" width="8" height="1" fill="#202020" fill-opacity="0.21"/><rect x="31" y="118" width="5" height="1" fill="#202020" fill-opacity="0.60"/><rect x="31" y="119" width="5" height="1" fill="#202020" fill-opacity="0.21"/><rect x="37" y="118" width="7" height="1" fill="#202020" fill-opacity="0.60"/><rect x="37" y="119" width="7" height="1" fill="#202020" fill-opacity="0.21"/><rect x="45" y="118" width="1" height="1" fill="#b02020" fill-opacity="0.55"/><rect x="45" y="119" width="1" height="1" fill="#b02020" fill-opacity="0.19"/><rect x="49" y="118" width="5" height="1" fill="#108a10" fill-opacity="0.55"/><rect x="49" y="119" width="5" height="1" fill="#108a10" fill-opacity="0.19"/><rect x="55" y="118" width="3" height="1" fill="#108a10" fill-opacity="0.55"/><rect x="55" y="119" width="3" height="1" fill="#108a10" fill-opacity="0.19"/><rect x="59" y="118" width="3" height="1" fill="#108a10" fill-opacity="0.55"/><rect x="59" y="119" width="3" height="1" fill="#108a10" fill-opacity="0.19"/><rect x="63" y="118" width="4" height="1" fill="#108a10" fill-opacity="0.55"/><rect x="63" y="119" width="4" height="1" fill="#108a10" fill-opacity="0.19"/><rect x="68" y="118" width="11" height="1" fill="#108a10" fill-opacity="0.55"/><rect x="68" y="119" width="11" height="1" fill="#108a10" fill-opacity="0.19"/><rect x="15" y="120" width="5" height="1" fill="#2020ff" fill-opacity="0.60"/><rect x="15" y="121" width="5" height="1" fill="#2020ff" fill-opacity="0.21"/><rect x="22" y="120" width="9" height="1" fill="#202020" fill-opacity="0.60"/><rect x="22" y="121" width="9" height="1" fill="#202020" fill-opacity="0.21"/><rect x="32" y="120" width="6" height="1" fill="#b02020" fill-opacity="0.55"/><rect x="32" y="121" width="6" height="1" fill="#b02020" fill-opacity="0.19"/><rect x="39" y="120" width="6" height="1" fill="#b02020" fill-opacity="0.55"/><rect x="39" y="121" width="6" height="1" fill="#b02020" fill-opacity="0.19"/><rect x="46" y="120" width="1" height="1" fill="#b02020" fill-opacity="0.55"/><rect x="46" y="121" width="1" height="1" fill="#b02020" fill-opacity="0.19"/><rect x="15" y="122" width="6" height="1" fill="#2020ff" fill-opacity="0.60"/><rect x="15" y="123" width="6" height="1" fill="#2020ff" fill-opacity="0.21"/><rect x="22" y="122" width="6" height="1" fill="#202020" fill-opacity="0.60"/><rect x="22" y="123" width="6" height="1" fill="#202020" fill-opacity="0.21"/><rect x="29" y="122" width="7" height="1" fill="#202020" fill-opacity="0.60"/><rect x="29" y="123" width="7" height="1" fill="#202020" fill-opacity="0.21"/><rect x="37" y="122" width="5" height="1" fill="#202020" fill-opacity="0.60"/><rect x="37" y="123" width="5" height="1" fill="#202020" fill-opacity="0.21"/><rect x="45" y="122" width="6" height="1" fill="#b02020" fill-opacity="0.55"/><rect x="45" y="123" width="6" height="1" fill="#b02020" fill-opacity="0.19"/><rect x="52" y="122" width="12" height="1" fill="#b02020" fill-opacity="0.55"/><rect x="52" y="123" width="12" height="1" fill="#b02020" fill-opacity="0.19"/><rect x="65" y="122" width="8" height="1" fill="#b02020" fill-opacity="0.55"/><rect x="65" y="123" width="8" height="1" fill="#b02020" fill-opacity="0.19"/><rect x="74" y="122" width="5" height="1" fill="#b02020" fill-opacity="0.55"/><rect x="74" y="123" width="5" height="1" fill="#b02020" fill-opacity="0.19"/><rect x="15" y="124" width="6" height="1" fill="#2020ff" fill-opacity="0.60"/><rect x="15" y="125" width="6" height="1" fill="#2020ff" fill-opacity="0.21"/><rect x="22" y="124" width="9" height="1" fill="#202020" fill-opacity="0.60"/><rect x="22" y="125" width="9" height="1" fill="#202020" fill-opacity="0.21"/><rect x="32" y="124" width="5" height="1" fill="#202020" fill-opacity="0.60"/><rect x="32" y="125" width="5" height="1" fill="#202020" fill-opacity="0.21"/><rect x="38" y="124" width="3" height="1" fill="#202020" fill-opacity="0.60"/><rect x="38" y="125" width="3" height="1" fill="#202020" fill-opacity="0.21"/><rect x="42" y="124" width="1" height="1" fill="#202020" fill-opacity="0.60"/><rect x="42" y="125" width="1" height="1" fill="#202020" fill-opacity="0.21"/><rect x="45" y="124" width="10" height="1" fill="#b02020" fill-opacity="0.55"/><rect x="45" y="125" width="10" height="1" fill="#b02020" fill-opacity="0.19"/><rect x="56" y="124" width="4" height="1" fill="#b02020" fill-opacity="0.55"/><rect x="56" y="125" width="4" height="1" fill="#b02020" fill-opacity="0.19"/><rect x="62" y="124" width="11" height="1" fill="#108a10" fill-opacity="0.55"/><rect x="62" y="125" width="11" height="1" fill="#108a10" fill-opacity="0.19"/><rect x="74" y="124" width="5" height="1" fill="#108a10" fill-opacity="0.55"/><rect x="74" y="125" width="5" height="1" fill="#108a10" fill-opacity="0.19"/><rect x="15" y="126" width="11" height="1" fill="#108a10" fill-opacity="0.55"/><rect x="15" y="127" width="11" height="1" fill="#108a10" fill-opacity="0.19"/><rect x="27" y="126" width="5" height="1" fill="#108a10" fill-opacity="0.55"/><rect x="27" y="127" width="5" height="1" fill="#108a10" fill-opacity="0.19"/><rect x="33" y="126" width="11" height="1" fill="#108a10" fill-opacity="0.55"/><rect x="33" y="127" width="11" height="1" fill="#108a10" fill-opacity="0.19"/><rect x="45" y="126" width="1" height="1" fill="#108a10" fill-opacity="0.55"/><rect x="45" y="127" width="1" height="1" fill="#108a10" fill-opacity="0.19"/><rect x="15" y="128" width="5" height="1" fill="#2020ff" fill-opacity="0.60"/><rect x="15" y="129" width="5" height="1" fill="#2020ff" fill-opacity="0.21"/><rect x="21" y="128" width="3" height="1" fill="#202020" fill-opacity="0.60"/><rect x="21" y="129" width="3" height="1" fill="#202020" fill-opacity="0.21"/><rect x="26" y="128" width="3" height="1" fill="#202020" fill-opacity="0.60"/><rect x="26" y="129" width="3" height="1" fill="#202020" fill-opacity="0.21"/><rect x="30" y="128" width="6" height="1" fill="#202020" fill-opacity="0.60"/><rect x="30" y="129" width="6" height="1" fill="#202020" fill-opacity="0.21"/><rect x="37" y="128" width="3" height="1" fill="#2020ff" fill-opacity="0.60"/><rect x="37" y="129" width="3" height="1" fill="#2020ff" fill-opacity="0.21"/><rect x="41" y="128" width="12" height="1" fill="#202020" fill-opacity="0.60"/><rect x="41" y="129" width="12" height="1" fill="#202020" fill-opacity="0.21"/><rect x="15" y="130" width="1" height="1" fill="#202020" fill-opacity="0.60"/><rect x="15" y="131" width="1" height="1" fill="#202020" fill-opacity="0.21"/><rect x="19" y="132" width="5" height="1" fill="#108a10" fill-opacity="0.55"/><rect x="19" y="133" width="5" height="1" fill="#108a10" fill-opacity="0.19"/><rect x="25" y="132" width="5" height="1" fill="#108a10" fill-opacity="0.55"/><rect x="25" y="133" width="5" height="1" fill="#108a10" fill-opacity="0.19"/><rect x="31" y="132" width="5" height="1" fill="#108a10" fill-opacity="0.55"/><rect x="31" y="133" width="5" height="1" fill="#108a10" fill-opacity="0.19"/><rect x="37" y="132" width="10" height="1" fill="#108a10" fill-opacity="0.55"/><rect x="37" y="133" width="10" height="1" fill="#108a10" fill-opacity="0.19"/><rect x="48" y="132" width="12" height="1" fill="#108a10" fill-opacity="0.55"/><rect x="48" y="133" width="12" height="1" fill="#108a10" fill-opacity="0.19"/><rect x="61" y="132" width="4" height="1" fill="#108a10" fill-opacity="0.55"/><rect x="61" y="133" width="4" height="1" fill="#108a10" fill-opacity="0.19"/><rect x="66" y="132" width="9" height="1" fill="#108a10" fill-opacity="0.55"/><rect x="66" y="133" width="9" height="1" fill="#108a10" fill-opacity="0.19"/><rect x="19" y="134" width="2" height="1" fill="#2020ff" fill-opacity="0.60"/><rect x="19" y="135" width="2" height="1" fill="#2020ff" fill-opacity="0.21"/><rect x="22" y="134" width="8" height="1" fill="#202020" fill-opacity="0.60"/><rect x="22" y="135" width="8" height="1" fill="#202020" fill-opacity="0.21"/><rect x="31" y="134" width="7" height="1" fill="#202020" fill-opacity="0.60"/><rect x="31" y="135" width="7" height="1" fill="#202020" fill-opacity="0.21"/><rect x="19" y="136" width="1" height="1" fill="#202020" fill-opacity="0.60"/><rect x="19" y="137" width="1" height="1" fill="#202020" fill-opacity="0.21"/><rect x="23" y="140" width="2" height="1" fill="#2020ff" fill-opacity="0.60"/><rect x="23" y="141" width="2" height="1" fill="#2020ff" fill-opacity="0.21"/><rect x="26" y="140" width="10" height="1" fill="#202020" fill-opacity="0.60"/><rect x="26" y="141" width="10" height="1" fill="#202020" fill-opacity="0.21"/><rect x="37" y="140" width="2" height="1" fill="#202020" fill-opacity="0.60"/><rect x="37" y="141" width="2" height="1" fill="#202020" fill-opacity="0.21"/><rect x="23" y="142" width="1" height="1" fill="#202020" fill-opacity="0.60"/><rect x="23" y="143" width="1" height="1" fill="#202020" fill-opacity="0.21"/><rect x="27" y="144" width="3" height="1" fill="#108a10" fill-opacity="0.55"/><rect x="27" y="145" width="3" height="1" fill="#108a10" fill-opacity="0.19"/><rect x="31" y="144" width="6" height="1" fill="#108a10" fill-opacity="0.55"/><rect x="31" y="145" width="6" height="1" fill="#108a10" fill-opacity="0.19"/><rect x="38" y="144" width="6" height="1" fill="#108a10" fill-opacity="0.55"/><rect x="38" y="145" width="6" height="1" fill="#108a10" fill-opacity="0.19"/><rect x="45" y="144" width="4" height="1" fill="#108a10" fill-opacity="0.55"/><rect x="45" y="145" width="4" height="1" fill="#108a10" fill-opacity="0.19"/><rect x="27" y="146" width="3" height="1" fill="#2020ff" fill-opacity="0.60"/><rect x="27" y="147" width="3" height="1" fill="#2020ff" fill-opacity="0.21"/><rect x="31" y="146" width="2" height="1" fill="#2020ff" fill-opacity="0.60"/><rect x="31" y="147" width="2" height="1" fill="#2020ff" fill-opacity="0.21"/><rect x="34" y="146" width="11" height="1" fill="#202020" fill-opacity="0.60"/><rect x="34" y="147" width="11" height="1" fill="#202020" fill-opacity="0.21"/><rect x="46" y="146" width="10" height="1" fill="#202020" fill-opacity="0.60"/><rect x="46" y="147" width="10" height="1" fill="#202020" fill-opacity="0.21"/><rect x="57" y="146" width="1" height="1" fill="#202020" fill-opacity="0.60"/><rect x="57" y="147" width="1" height="1" fill="#202020" fill-opacity="0.21"/><rect x="60" y="146" width="3" height="1" fill="#b02020" fill-opacity="0.55"/><rect x="60" y="147" width="3" height="1" fill="#b02020" fill-opacity="0.19"/><rect x="64" y="146" width="4" height="1" fill="#b02020" fill-opacity="0.55"/><rect x="64" y="147" width="4" height="1" fill="#b02020" fill-opacity="0.19"/><rect x="69" y="146" width="10" height="1" fill="#b02020" fill-opacity="0.55"/><rect x="69" y="147" width="10" height="1" fill="#b02020" fill-opacity="0.19"/><rect x="27" y="148" width="6" height="1" fill="#2020ff" fill-opacity="0.60"/><rect x="27" y="149" width="6" height="1" fill="#2020ff" fill-opacity="0.21"/><rect x="34" y="148" width="12" height="1" fill="#202020" fill-opacity="0.60"/><rect x="34" y="149" width="12" height="1" fill="#202020" fill-opacity="0.21"/><rect x="47" y="148" width="4" height="1" fill="#202020" fill-opacity="0.60"/><rect x="47" y="149" width="4" height="1" fill="#202020" fill-opacity="0.21"/><rect x="27" y="150" width="1" height="1" fill="#2020ff" fill-opacity="0.60"/><rect x="27" y="151" width="1" height="1" fill="#2020ff" fill-opacity="0.21"/><rect x="30" y="150" width="11" height="1" fill="#202020" fill-opacity="0.60"/><rect x="30" y="151" width="11" height="1" fill="#202020" fill-opacity="0.21"/><rect x="42" y="150" width="6" height="1" fill="#202020" fill-opacity="0.60"/><rect x="42" y="151" width="6" height="1" fill="#202020" fill-opacity="0.21"/><rect x="49" y="150" width="2" height="1" fill="#202020" fill-opacity="0.60"/><rect x="49" y="151" width="2" height="1" fill="#202020" fill-opacity="0.21"/><rect x="52" y="150" width="5" height="1" fill="#2020ff" fill-opacity="0.60"/><rect x="52" y="151" width="5" height="1" fill="#2020ff" fill-opacity="0.21"/><rect x="27" y="152" width="1" height="1" fill="#202020" fill-opacity="0.60"/><rect x="27" y="153" width="1" height="1" fill="#202020" fill-opacity="0.21"/><rect x="31" y="154" width="5" height="1" fill="#202020" fill-opacity="0.60"/><rect x="31" y="155" width="5" height="1" fill="#202020" fill-opacity="0.21"/><rect x="36" y="154" width="6" height="1" fill="#2020ff" fill-opacity="0.60"/><rect x="36" y="155" width="6" height="1" fill="#2020ff" fill-opacity="0.21"/><rect x="44" y="154" width="11" height="1" fill="#202020" fill-opacity="0.60"/><rect x="44" y="155" width="11" height="1" fill="#202020" fill-opacity="0.21"/><rect x="56" y="154" width="6" height="1" fill="#202020" fill-opacity="0.60"/><rect x="56" y="155" width="6" height="1" fill="#202020" fill-opacity="0.21"/><rect x="63" y="154" width="11" height="1" fill="#202020" fill-opacity="0.60"/><rect x="63" y="155" width="11" height="1" fill="#202020" fill-opacity="0.21"/><rect x="75" y="154" width="4" height="1" fill="#202020" fill-opacity="0.60"/><rect x="75" y="155" width="4" height="1" fill="#202020" fill-opacity="0.21"/><rect x="31" y="156" width="5" height="1" fill="#2020ff" fill-opacity="0.60"/><rect x="31" y="157" width="5" height="1" fill="#2020ff" fill-opacity="0.21"/><rect x="38" y="156" width="3" height="1" fill="#2020ff" fill-opacity="0.60"/><rect x="38" y="157" width="3" height="1" fill="#2020ff" fill-opacity="0.21"/><rect x="44" y="156" width="10" height="1" fill="#202020" fill-opacity="0.60"/><rect x="44" y="157" width="10" height="1" fill="#202020" fill-opacity="0.21"/><rect x="55" y="156" width="5" height="1" fill="#202020" fill-opacity="0.60"/><rect x="55" y="157" width="5" height="1" fill="#202020" fill-opacity="0.21"/><rect x="61" y="156" width="9" height="1" fill="#202020" fill-opacity="0.60"/><rect x="61" y="157" width="9" height="1" fill="#202020" fill-opacity="0.21"/><rect x="31" y="158" width="1" height="1" fill="#202020" fill-opacity="0.60"/><rect x="31" y="159" width="1" height="1" fill="#202020" fill-opacity="0.21"/><rect x="35" y="160" width="9" height="1" fill="#202020" fill-opacity="0.60"/><rect x="35" y="161" width="9" height="1" fill="#202020" fill-opacity="0.21"/><rect x="45" y="160" width="10" height="1" fill="#202020" fill-opacity="0.60"/><rect x="45" y="161" width="10" height="1" fill="#202020" fill-opacity="0.21"/><rect x="56" y="160" width="8" height="1" fill="#202020" fill-opacity="0.60"/><rect x="56" y="161" width="8" height="1" fill="#202020" fill-opacity="0.21"/><rect x="65" y="160" width="4" height="1" fill="#202020" fill-opacity="0.60"/><rect x="65" y="161" width="4" height="1" fill="#202020" fill-opacity="0.21"/><rect x="70" y="160" width="6" height="1" fill="#202020" fill-opacity="0.60"/><rect x="70" y="161" width="6" height="1" fill="#202020" fill-opacity="0.21"/><rect x="77" y="160" width="2" height="1" fill="#202020" fill-opacity="0.60"/><rect x="77" y="161" width="2" height="1" fill="#202020" fill-opacity="0.21"/><rect x="31" y="162" width="1" height="1" fill="#202020" fill-opacity="0.60"/><rect x="31" y="163" width="1" height="1" fill="#202020" fill-opacity="0.21"/><rect x="31" y="164" width="6" height="1" fill="#2020ff" fill-opacity="0.60"/><rect x="31" y="165" width="6" height="1" fill="#2020ff" fill-opacity="0.21"/><rect x="38" y="164" width="7" height="1" fill="#202020" fill-opacity="0.60"/><rect x="38" y="165" width="7" height="1" fill="#202020" fill-opacity="0.21"/><rect x="46" y="164" width="4" height="1" fill="#202020" fill-opacity="0.60"/><rect x="46" y="165" width="4" height="1" fill="#202020" fill-opacity="0.21"/><rect x="51" y="164" width="5" height="1" fill="#202020" fill-opacity="0.60"/><rect x="51" y="165" width="5" height="1" fill="#202020" fill-opacity="0.21"/><rect x="57" y="164" width="8" height="1" fill="#202020" fill-opacity="0.60"/><rect x="57" y="165" width="8" height="1" fill="#202020" fill-opacity="0.21"/><rect x="66" y="164" width="5" height="1" fill="#202020" fill-opacity="0.60"/><rect x="66" y="165" width="5" height="1" fill="#202020" fill-opacity="0.21"/><rect x="72" y="164" width="7" height="1" fill="#202020" fill-opacity="0.60"/><rect x="72" y="165" width="7" height="1" fill="#202020" fill-opacity="0.21"/><rect x="31" y="166" width="5" height="1" fill="#108a10" fill-opacity="0.55"/><rect x="31" y="167" width="5" height="1" fill="#108a10" fill-opacity="0.19"/><rect x="37" y="166" width="10" height="1" fill="#108a10" fill-opacity="0.55"/><rect x="37" y="167" width="10" height="1" fill="#108a10" fill-opacity="0.19"/><rect x="48" y="166" width="6" height="1" fill="#108a10" fill-opacity="0.55"/><rect x="48" y="167" width="6" height="1" fill="#108a10" fill-opacity="0.19"/><rect x="55" y="166" width="4" height="1" fill="#108a10" fill-opacity="0.55"/><rect x="55" y="167" width="4" height="1" fill="#108a10" fill-opacity="0.19"/><rect x="60" y="166" width="9" height="1" fill="#108a10" fill-opacity="0.55"/><rect x="60" y="167" width="9" height="1" fill="#108a10" fill-opacity="0.19"/><rect x="70" y="166" width="9" height="1" fill="#108a10" fill-opacity="0.55"/><rect x="70" y="167" width="9" height="1" fill="#108a10" fill-opacity="0.19"/><rect x="31" y="168" width="5" height="1" fill="#202020" fill-opacity="0.60"/><rect x="31" y="169" width="5" height="1" fill="#202020" fill-opacity="0.21"/><rect x="37" y="168" width="6" height="1" fill="#202020" fill-opacity="0.60"/><rect x="37" y="169" width="6" height="1" fill="#202020" fill-opacity="0.21"/><rect x="44" y="168" width="5" height="1" fill="#202020" fill-opacity="0.60"/><rect x="44" y="169" width="5" height="1" fill="#202020" fill-opacity="0.21"/><rect x="50" y="168" width="9" height="1" fill="#202020" fill-opacity="0.60"/><rect x="50" y="169" width="9" height="1" fill="#202020" fill-opacity="0.21"/><rect x="60" y="168" width="11" height="1" fill="#202020" fill-opacity="0.60"/><rect x="60" y="169" width="11" height="1" fill="#202020" fill-opacity="0.21"/><rect x="72" y="168" width="7" height="1" fill="#202020" fill-opacity="0.60"/><rect x="72" y="169" width="7" height="1" fill="#202020" fill-opacity="0.21"/><rect x="27" y="170" width="1" height="1" fill="#202020" fill-opacity="0.60"/><rect x="27" y="171" width="1" height="1" fill="#202020" fill-opacity="0.21"/><rect x="27" y="172" width="4" height="1" fill="#2020ff" fill-opacity="0.60"/><rect x="27" y="173" width="4" height="1" fill="#2020ff" fill-opacity="0.21"/><rect x="32" y="172" width="6" height="1" fill="#108a10" fill-opacity="0.55"/><rect x="32" y="173" width="6" height="1" fill="#108a10" fill-opacity="0.19"/><rect x="39" y="172" width="8" height="1" fill="#108a10" fill-opacity="0.55"/><rect x="39" y="173" width="8" height="1" fill="#108a10" fill-opacity="0.19"/><rect x="48" y="172" width="8" height="1" fill="#108a10" fill-opacity="0.55"/><rect x="48" y="173" width="8" height="1" fill="#108a10" fill-opacity="0.19"/><rect x="57" y="172" width="2" height="1" fill="#108a10" fill-opacity="0.55"/><rect x="57" y="173" width="2" height="1" fill="#108a10" fill-opacity="0.19"/><rect x="27" y="174" width="1" height="1" fill="#202020" fill-opacity="0.60"/><rect x="27" y="175" width="1" height="1" fill="#202020" fill-opacity="0.21"/><rect x="30" y="176" width="3" height="1" fill="#202020" fill-opacity="0.60"/><rect x="30" y="177" width="3" height="1" fill="#202020" fill-opacity="0.21"/><rect x="34" y="176" width="8" height="1" fill="#202020" fill-opacity="0.60"/><rect x="34" y="177" width="8" height="1" fill="#202020" fill-opacity="0.21"/><rect x="43" y="176" width="11" height="1" fill="#202020" fill-opacity="0.60"/><rect x="43" y="177" width="11" height="1" fill="#202020" fill-opacity="0.21"/><rect x="55" y="176" width="10" height="1" fill="#202020" fill-opacity="0.60"/><rect x="55" y="177" width="10" height="1" fill="#202020" fill-opacity="0.21"/><rect x="66" y="176" width="1" height="1" fill="#202020" fill-opacity="0.60"/><rect x="66" y="177" width="1" height="1" fill="#202020" fill-opacity="0.21"/><rect x="27" y="178" width="1" height="1" fill="#202020" fill-opacity="0.60"/><rect x="27" y="179" width="1" height="1" fill="#202020" fill-opacity="0.21"/><rect x="27" y="182" width="9" height="1" fill="#202020" fill-opacity="0.60"/><rect x="27" y="183" width="9" height="1" fill="#202020" fill-opacity="0.21"/><rect x="37" y="182" width="8" height="1" fill="#202020" fill-opacity="0.60"/><rect x="37" y="183" width="8" height="1" fill="#202020" fill-opacity="0.21"/><rect x="46" y="182" width="6" height="1" fill="#202020" fill-opacity="0.60"/><rect x="46" y="183" width="6" height="1" fill="#202020" fill-opacity="0.21"/><rect x="55" y="182" width="3" height="1" fill="#2020ff" fill-opacity="0.60"/><rect x="55" y="183" width="3" height="1" fill="#2020ff" fill-opacity="0.21"/><rect x="59" y="182" width="7" height="1" fill="#202020" fill-opacity="0.60"/><rect x="59" y="183" width="7" height="1" fill="#202020" fill-opacity="0.21"/><rect x="67" y="182" width="8" height="1" fill="#202020" fill-opacity="0.60"/><rect x="67" y="183" width="8" height="1" fill="#202020" fill-opacity="0.21"/><rect x="27" y="186" width="4" height="1" fill="#2020ff" fill-opacity="0.60"/><rect x="27" y="187" width="4" height="1" fill="#2020ff" fill-opacity="0.21"/><rect x="32" y="186" width="1" height="1" fill="#2020ff" fill-opacity="0.60"/><rect x="32" y="187" width="1" height="1" fill="#2020ff" fill-opacity="0.21"/><rect x="34" y="186" width="6" height="1" fill="#202020" fill-opacity="0.60"/><rect x="34" y="187" width="6" height="1" fill="#202020" fill-opacity="0.21"/><rect x="41" y="186" width="1" height="1" fill="#202020" fill-opacity="0.60"/><rect x="41" y="187" width="1" height="1" fill="#202020" fill-opacity="0.21"/><rect x="43" y="186" width="4" height="1" fill="#a06000" fill-opacity="0.70"/><rect x="43" y="187" width="4" height="1" fill="#a06000" fill-opacity="0.24"/><rect x="27" y="188" width="2" height="1" fill="#2020ff" fill-opacity="0.60"/><rect x="27" y="189" width="2" height="1" fill="#2020ff" fill-opacity="0.21"/><rect x="32" y="188" width="3" height="1" fill="#2020ff" fill-opacity="0.60"/><rect x="32" y="189" width="3" height="1" fill="#2020ff" fill-opacity="0.21"/><rect x="36" y="188" width="3" height="1" fill="#202020" fill-opacity="0.60"/><rect x="36" y="189" width="3" height="1" fill="#202020" fill-opacity="0.21"/><rect x="40" y="188" width="5" height="1" fill="#202020" fill-opacity="0.60"/><rect x="40" y="189" width="5" height="1" fill="#202020" fill-opacity="0.21"/><rect x="46" y="188" width="7" height="1" fill="#202020" fill-opacity="0.60"/><rect x="46" y="189" width="7" height="1" fill="#202020" fill-opacity="0.21"/><rect x="54" y="188" width="5" height="1" fill="#202020" fill-opacity="0.60"/><rect x="54" y="189" width="5" height="1" fill="#202020" fill-opacity="0.21"/><rect x="60" y="188" width="9" height="1" fill="#202020" fill-opacity="0.60"/><rect x="60" y="189" width="9" height="1" fill="#202020" fill-opacity="0.21"/><rect x="31" y="190" width="1" height="1" fill="#202020" fill-opacity="0.60"/><rect x="31" y="191" width="1" height="1" fill="#202020" fill-opacity="0.21"/><rect x="39" y="192" width="9" height="1" fill="#202020" fill-opacity="0.60"/><rect x="39" y="193" width="9" height="1" fill="#202020" fill-opacity="0.21"/><rect x="49" y="192" width="5" height="1" fill="#202020" fill-opacity="0.60"/><rect x="49" y="193" width="5" height="1" fill="#202020" fill-opacity="0.21"/><rect x="55" y="192" width="11" height="1" fill="#202020" fill-opacity="0.60"/><rect x="55" y="193" width="11" height="1" fill="#202020" fill-opacity="0.21"/><rect x="39" y="194" width="2" height="1" fill="#2020ff" fill-opacity="0.60"/><rect x="39" y="195" width="2" height="1" fill="#2020ff" fill-opacity="0.21"/><rect x="42" y="194" width="12" height="1" fill="#202020" fill-opacity="0.60"/><rect x="42" y="195" width="12" height="1" fill="#202020" fill-opacity="0.21"/><rect x="55" y="194" width="10" height="1" fill="#202020" fill-opacity="0.60"/><rect x="55" y="195" width="10" height="1" fill="#202020" fill-opacity="0.21"/><rect x="66" y="194" width="7" height="1" fill="#202020" fill-opacity="0.60"/><rect x="66" y="195" width="7" height="1" fill="#202020" fill-opacity="0.21"/><rect x="39" y="196" width="1" height="1" fill="#202020" fill-opacity="0.60"/><rect x="39" y="197" width="1" height="1" fill="#202020" fill-opacity="0.21"/><rect x="43" y="198" width="7" height="1" fill="#202020" fill-opacity="0.60"/><rect x="43" y="199" width="7" height="1" fill="#202020" fill-opacity="0.21"/><rect x="51" y="198" width="3" height="1" fill="#202020" fill-opacity="0.60"/><rect x="51" y="199" width="3" height="1" fill="#202020" fill-opacity="0.21"/><rect x="55" y="198" width="5" height="1" fill="#202020" fill-opacity="0.60"/><rect x="55" y="199" width="5" height="1" fill="#202020" fill-opacity="0.21"/><rect x="61" y="198" width="9" height="1" fill="#202020" fill-opacity="0.60"/><rect x="61" y="199" width="9" height="1" fill="#202020" fill-opacity="0.21"/><rect x="71" y="198" width="4" height="1" fill="#202020" fill-opacity="0.60"/><rect x="71" y="199" width="4" height="1" fill="#202020" fill-opacity="0.21"/><rect x="76" y="198" width="3" height="1" fill="#202020" fill-opacity="0.60"/><rect x="76" y="199" width="3" height="1" fill="#202020" fill-opacity="0.21"/><rect x="39" y="200" width="1" height="1" fill="#202020" fill-opacity="0.60"/><rect x="39" y="201" width="1" height="1" fill="#202020" fill-opacity="0.21"/><rect x="31" y="202" width="1" height="1" fill="#202020" fill-opacity="0.60"/><rect x="31" y="203" width="1" height="1" fill="#202020" fill-opacity="0.21"/><rect x="27" y="204" width="7" height="1" fill="#202020" fill-opacity="0.60"/><rect x="27" y="205" width="7" height="1" fill="#202020" fill-opacity="0.21"/><rect x="35" y="204" width="4" height="1" fill="#202020" fill-opacity="0.60"/><rect x="35" y="205" width="4" height="1" fill="#202020" fill-opacity="0.21"/><rect x="40" y="204" width="12" height="1" fill="#202020" fill-opacity="0.60"/><rect x="40" y="205" width="12" height="1" fill="#202020" fill-opacity="0.21"/><rect x="53" y="204" width="5" height="1" fill="#202020" fill-opacity="0.60"/><rect x="53" y="205" width="5" height="1" fill="#202020" fill-opacity="0.21"/><rect x="27" y="208" width="4" height="1" fill="#2020ff" fill-opacity="0.60"/><rect x="27" y="209" width="4" height="1" fill="#2020ff" fill-opacity="0.21"/><rect x="32" y="208" width="1" height="1" fill="#2020ff" fill-opacity="0.60"/><rect x="32" y="209" width="1" height="1" fill="#2020ff" fill-opacity="0.21"/><rect x="34" y="208" width="4" height="1" fill="#202020" fill-opacity="0.60"/><rect x="34" y="209" width="4" height="1" fill="#202020" fill-opacity="0.21"/><rect x="39" y="208" width="10" height="1" fill="#202020" fill-opacity="0.60"/><rect x="39" y="209" width="10" height="1" fill="#202020" fill-opacity="0.21"/><rect x="50" y="208" width="2" height="1" fill="#202020" fill-opacity="0.60"/><rect x="50" y="209" width="2" height="1" fill="#202020" fill-opacity="0.21"/><rect x="52" y="208" width="2" height="1" fill="#b02020" fill-opacity="0.55"/><rect x="52" y="209" width="2" height="1" fill="#b02020" fill-opacity="0.19"/><rect x="27" y="210" width="1" height="1" fill="#2020ff" fill-opacity="0.60"/><rect x="27" y="211" width="1" height="1" fill="#2020ff" fill-opacity="0.21"/><rect x="30" y="210" width="9" height="1" fill="#202020" fill-opacity="0.60"/><rect x="30" y="211" width="9" height="1" fill="#202020" fill-opacity="0.21"/><rect x="40" y="210" width="7" height="1" fill="#202020" fill-opacity="0.60"/><rect x="40" y="211" width="7" height="1" fill="#202020" fill-opacity="0.21"/><rect x="48" y="210" width="3" height="1" fill="#202020" fill-opacity="0.60"/><rect x="48" y="211" width="3" height="1" fill="#202020" fill-opacity="0.21"/><rect x="52" y="210" width="5" height="1" fill="#2020ff" fill-opacity="0.60"/><rect x="52" y="211" width="5" height="1" fill="#2020ff" fill-opacity="0.21"/><rect x="27" y="212" width="1" height="1" fill="#202020" fill-opacity="0.60"/><rect x="27" y="213" width="1" height="1" fill="#202020" fill-opacity="0.21"/><rect x="31" y="214" width="7" height="1" fill="#2020ff" fill-opacity="0.60"/><rect x="31" y="215" width="7" height="1" fill="#2020ff" fill-opacity="0.21"/><rect x="39" y="214" width="4" height="1" fill="#2020ff" fill-opacity="0.60"/><rect x="39" y="215" width="4" height="1" fill="#2020ff" fill-opacity="0.21"/><rect x="44" y="214" width="4" height="1" fill="#202020" fill-opacity="0.60"/><rect x="44" y="215" width="4" height="1" fill="#202020" fill-opacity="0.21"/><rect x="49" y="214" width="3" height="1" fill="#202020" fill-opacity="0.60"/><rect x="49" y="215" width="3" height="1" fill="#202020" fill-opacity="0.21"/><rect x="53" y="214" width="2" height="1" fill="#2020ff" fill-opacity="0.60"/><rect x="53" y="215" width="2" height="1" fill="#2020ff" fill-opacity="0.21"/><rect x="56" y="214" width="3" height="1" fill="#202020" fill-opacity="0.60"/><rect x="56" y="215" width="3" height="1" fill="#202020" fill-opacity="0.21"/><rect x="60" y="214" width="5" height="1" fill="#202020" fill-opacity="0.60"/><rect x="60" y="215" width="5" height="1" fill="#202020" fill-opacity="0.21"/><rect x="66" y="214" width="6" height="1" fill="#202020" fill-opacity="0.60"/><rect x="66" y="215" width="6" height="1" fill="#202020" fill-opacity="0.21"/><rect x="73" y="214" width="1" height="1" fill="#202020" fill-opacity="0.60"/><rect x="73" y="215" width="1" height="1" fill="#202020" fill-opacity="0.21"/><rect x="31" y="216" width="1" height="1" fill="#202020" fill-opacity="0.60"/><rect x="31" y="217" width="1" height="1" fill="#202020" fill-opacity="0.21"/><rect x="35" y="218" width="11" height="1" fill="#202020" fill-opacity="0.60"/><rect x="35" y="219" width="11" height="1" fill="#202020" fill-opacity="0.21"/><rect x="47" y="218" width="4" height="1" fill="#202020" fill-opacity="0.60"/><rect x="47" y="219" width="4" height="1" fill="#202020" fill-opacity="0.21"/><rect x="53" y="218" width="1" height="1" fill="#202020" fill-opacity="0.60"/><rect x="53" y="219" width="1" height="1" fill="#202020" fill-opacity="0.21"/><rect x="56" y="218" width="9" height="1" fill="#202020" fill-opacity="0.60"/><rect x="56" y="219" width="9" height="1" fill="#202020" fill-opacity="0.21"/><rect x="35" y="220" width="11" height="1" fill="#202020" fill-opacity="0.60"/><rect x="35" y="221" width="11" height="1" fill="#202020" fill-opacity="0.21"/><rect x="47" y="220" width="4" height="1" fill="#202020" fill-opacity="0.60"/><rect x="47" y="221" width="4" height="1" fill="#202020" fill-opacity="0.21"/><rect x="53" y="220" width="1" height="1" fill="#202020" fill-opacity="0.60"/><rect x="53" y="221" width="1" height="1" fill="#202020" fill-opacity="0.21"/><rect x="56" y="220" width="8" height="1" fill="#202020" fill-opacity="0.60"/><rect x="56" y="221" width="8" height="1" fill="#202020" fill-opacity="0.21"/><rect x="65" y="220" width="3" height="1" fill="#202020" fill-opacity="0.60"/><rect x="65" y="221" width="3" height="1" fill="#202020" fill-opacity="0.21"/><rect x="69" y="220" width="7" height="1" fill="#202020" fill-opacity="0.60"/><rect x="69" y="221" width="7" height="1" fill="#202020" fill-opacity="0.21"/><rect x="78" y="220" width="1" height="1" fill="#108a10" fill-opacity="0.55"/><rect x="78" y="221" width="1" height="1" fill="#108a10" fill-opacity="0.19"/><rect x="31" y="222" width="1" height="1" fill="#202020" fill-opacity="0.60"/><rect x="31" y="223" width="1" height="1" fill="#202020" fill-opacity="0.21"/><rect x="27" y="224" width="1" height="1" fill="#202020" fill-opacity="0.60"/><rect x="27" y="225" width="1" height="1" fill="#202020" fill-opacity="0.21"/><rect x="27" y="228" width="6" height="1" fill="#2020ff" fill-opacity="0.60"/><rect x="27" y="229" width="6" height="1" fill="#2020ff" fill-opacity="0.21"/><rect x="34" y="228" width="11" height="1" fill="#202020" fill-opacity="0.60"/><rect x="34" y="229" width="11" height="1" fill="#202020" fill-opacity="0.21"/><rect x="46" y="228" width="6" height="1" fill="#202020" fill-opacity="0.60"/><rect x="46" y="229" width="6" height="1" fill="#202020" fill-opacity="0.21"/><rect x="53" y="228" width="2" height="1" fill="#202020" fill-opacity="0.60"/><rect x="53" y="229" width="2" height="1" fill="#202020" fill-opacity="0.21"/><rect x="57" y="228" width="3" height="1" fill="#b02020" fill-opacity="0.55"/><rect x="57" y="229" width="3" height="1" fill="#b02020" fill-opacity="0.19"/><rect x="27" y="230" width="1" height="1" fill="#2020ff" fill-opacity="0.60"/><rect x="27" y="231" width="1" height="1" fill="#2020ff" fill-opacity="0.21"/><rect x="30" y="230" width="10" height="1" fill="#202020" fill-opacity="0.60"/><rect x="30" y="231" width="10" height="1" fill="#202020" fill-opacity="0.21"/><rect x="41" y="230" width="4" height="1" fill="#202020" fill-opacity="0.60"/><rect x="41" y="231" width="4" height="1" fill="#202020" fill-opacity="0.21"/><rect x="46" y="230" width="1" height="1" fill="#202020" fill-opacity="0.60"/><rect x="46" y="231" width="1" height="1" fill="#202020" fill-opacity="0.21"/><rect x="48" y="230" width="5" height="1" fill="#2020ff" fill-opacity="0.60"/><rect x="48" y="231" width="5" height="1" fill="#2020ff" fill-opacity="0.21"/><rect x="27" y="232" width="1" height="1" fill="#202020" fill-opacity="0.60"/><rect x="27" y="233" width="1" height="1" fill="#202020" fill-opacity="0.21"/><rect x="31" y="234" width="7" height="1" fill="#2020ff" fill-opacity="0.60"/><rect x="31" y="235" width="7" height="1" fill="#2020ff" fill-opacity="0.21"/><rect x="39" y="234" width="4" height="1" fill="#2020ff" fill-opacity="0.60"/><rect x="39" y="235" width="4" height="1" fill="#2020ff" fill-opacity="0.21"/><rect x="44" y="234" width="7" height="1" fill="#202020" fill-opacity="0.60"/><rect x="44" y="235" width="7" height="1" fill="#202020" fill-opacity="0.21"/><rect x="53" y="234" width="1" height="1" fill="#2020ff" fill-opacity="0.60"/><rect x="53" y="235" width="1" height="1" fill="#2020ff" fill-opacity="0.21"/><rect x="55" y="234" width="6" height="1" fill="#202020" fill-opacity="0.60"/><rect x="55" y="235" width="6" height="1" fill="#202020" fill-opacity="0.21"/><rect x="62" y="234" width="7" height="1" fill="#202020" fill-opacity="0.60"/><rect x="62" y="235" width="7" height="1" fill="#202020" fill-opacity="0.21"/><rect x="31" y="236" width="1" height="1" fill="#202020" fill-opacity="0.60"/><rect x="31" y="237" width="1" height="1" fill="#202020" fill-opacity="0.21"/><rect x="35" y="238" width="5" height="1" fill="#202020" fill-opacity="0.60"/><rect x="35" y="239" width="5" height="1" fill="#202020" fill-opacity="0.21"/><rect x="41" y="238" width="9" height="1" fill="#202020" fill-opacity="0.60"/><rect x="41" y="239" width="9" height="1" fill="#202020" fill-opacity="0.21"/><rect x="51" y="238" width="5" height="1" fill="#202020" fill-opacity="0.60"/><rect x="51" y="239" width="5" height="1" fill="#202020" fill-opacity="0.21"/><rect x="58" y="238" width="3" height="1" fill="#202020" fill-opacity="0.60"/><rect x="58" y="239" width="3" height="1" fill="#202020" fill-opacity="0.21"/><rect x="62" y="238" width="5" height="1" fill="#202020" fill-opacity="0.60"/><rect x="62" y="239" width="5" height="1" fill="#202020" fill-opacity="0.21"/><rect x="35" y="240" width="3" height="1" fill="#202020" fill-opacity="0.60"/><rect x="35" y="241" width="3" height="1" fill="#202020" fill-opacity="0.21"/><rect x="39" y="240" width="4" height="1" fill="#202020" fill-opacity="0.60"/><rect x="39" y="241" width="4" height="1" fill="#202020" fill-opacity="0.21"/><rect x="44" y="240" width="7" height="1" fill="#202020" fill-opacity="0.60"/><rect x="44" y="241" width="7" height="1" fill="#202020" fill-opacity="0.21"/><rect x="52" y="240" width="4" height="1" fill="#202020" fill-opacity="0.60"/><rect x="52" y="241" width="4" height="1" fill="#202020" fill-opacity="0.21"/><rect x="58" y="240" width="5" height="1" fill="#202020" fill-opacity="0.60"/><rect x="58" y="241" width="5" height="1" fill="#202020" fill-opacity="0.21"/><rect x="64" y="240" width="3" height="1" fill="#202020" fill-opacity="0.60"/><rect x="64" y="241" width="3" height="1" fill="#202020" fill-opacity="0.21"/><rect x="68" y="240" width="4" height="1" fill="#202020" fill-opacity="0.60"/><rect x="68" y="241" width="4" height="1" fill="#202020" fill-opacity="0.21"/><rect x="73" y="240" width="6" height="1" fill="#202020" fill-opacity="0.60"/><rect x="73" y="241" width="6" height="1" fill="#202020" fill-opacity="0.21"/><rect x="31" y="242" width="1" height="1" fill="#202020" fill-opacity="0.60"/><rect x="31" y="243" width="1" height="1" fill="#202020" fill-opacity="0.21"/><rect x="27" y="244" width="1" height="1" fill="#202020" fill-opacity="0.60"/><rect x="27" y="245" width="1" height="1" fill="#202020" fill-opacity="0.21"/><rect x="27" y="248" width="6" height="1" fill="#2020ff" fill-opacity="0.60"/><rect x="27" y="249" width="6" height="1" fill="#2020ff" fill-opacity="0.21"/><rect x="34" y="248" width="6" height="1" fill="#202020" fill-opacity="0.60"/><rect x="34" y="249" width="6" height="1" fill="#202020" fill-opacity="0.21"/><rect x="41" y="248" width="7" height="1" fill="#202020" fill-opacity="0.60"/><rect x="41" y="249" width="7" height="1" fill="#202020" fill-opacity="0.21"/><rect x="49" y="248" width="3" height="1" fill="#202020" fill-opacity="0.60"/><rect x="49" y="249" width="3" height="1" fill="#202020" fill-opacity="0.21"/><rect x="53" y="248" width="10" height="1" fill="#202020" fill-opacity="0.60"/><rect x="53" y="249" width="10" height="1" fill="#202020" fill-opacity="0.21"/><rect x="64" y="248" width="5" height="1" fill="#202020" fill-opacity="0.60"/><rect x="64" y="249" width="5" height="1" fill="#202020" fill-opacity="0.21"/><rect x="72" y="248" width="3" height="1" fill="#b02020" fill-opacity="0.55"/><rect x="72" y="249" width="3" height="1" fill="#b02020" fill-opacity="0.19"/><rect x="77" y="248" width="2" height="1" fill="#108a10" fill-opacity="0.55"/><rect x="77" y="249" width="2" height="1" fill="#108a10" fill-opacity="0.19"/><rect x="27" y="252" width="6" height="1" fill="#2020ff" fill-opacity="0.60"/><rect x="27" y="253" width="6" height="1" fill="#2020ff" fill-opacity="0.21"/><rect x="34" y="252" width="3" height="1" fill="#202020" fill-opacity="0.60"/><rect x="34" y="253" width="3" height="1" fill="#202020" fill-opacity="0.21"/><rect x="38" y="252" width="7" height="1" fill="#202020" fill-opacity="0.60"/><rect x="38" y="253" width="7" height="1" fill="#202020" fill-opacity="0.21"/><rect x="46" y="252" width="2" height="1" fill="#202020" fill-opacity="0.60"/><rect x="46" y="253" width="2" height="1" fill="#202020" fill-opacity="0.21"/><rect x="49" y="252" width="8" height="1" fill="#b02020" fill-opacity="0.55"/><rect x="49" y="253" width="8" height="1" fill="#b02020" fill-opacity="0.19"/><rect x="58" y="252" width="11" height="1" fill="#b02020" fill-opacity="0.55"/><rect x="58" y="253" width="11" height="1" fill="#b02020" fill-opacity="0.19"/><rect x="70" y="252" width="8" height="1" fill="#b02020" fill-opacity="0.55"/><rect x="70" y="253" width="8" height="1" fill="#b02020" fill-opacity="0.19"/><rect x="27" y="254" width="6" height="1" fill="#202020" fill-opacity="0.60"/><rect x="27" y="255" width="6" height="1" fill="#202020" fill-opacity="0.21"/><rect x="34" y="254" width="3" height="1" fill="#202020" fill-opacity="0.60"/><rect x="34" y="255" width="3" height="1" fill="#202020" fill-opacity="0.21"/><rect x="38" y="254" width="7" height="1" fill="#202020" fill-opacity="0.60"/><rect x="38" y="255" width="7" height="1" fill="#202020" fill-opacity="0.21"/><rect x="46" y="254" width="6" height="1" fill="#202020" fill-opacity="0.60"/><rect x="46" y="255" width="6" height="1" fill="#202020" fill-opacity="0.21"/><rect x="53" y="254" width="8" height="1" fill="#202020" fill-opacity="0.60"/><rect x="53" y="255" width="8" height="1" fill="#202020" fill-opacity="0.21"/><rect x="62" y="254" width="5" height="1" fill="#b02020" fill-opacity="0.55"/><rect x="62" y="255" width="5" height="1" fill="#b02020" fill-opacity="0.19"/><rect x="68" y="254" width="3" height="1" fill="#b02020" fill-opacity="0.55"/><rect x="68" y="255" width="3" height="1" fill="#b02020" fill-opacity="0.19"/><rect x="72" y="254" width="5" height="1" fill="#b02020" fill-opacity="0.55"/><rect x="72" y="255" width="5" height="1" fill="#b02020" fill-opacity="0.19"/><rect x="77" y="254" width="2" height="1" fill="#202020" fill-opacity="0.60"/><rect x="77" y="255" width="2" height="1" fill="#202020" fill-opacity="0.21"/><rect x="27" y="256" width="4" height="1" fill="#108a10" fill-opacity="0.55"/><rect x="27" y="257" width="4" height="1" fill="#108a10" fill-opacity="0.19"/><rect x="32" y="256" width="10" height="1" fill="#108a10" fill-opacity="0.55"/><rect x="32" y="257" width="10" height="1" fill="#108a10" fill-opacity="0.19"/><rect x="43" y="256" width="7" height="1" fill="#108a10" fill-opacity="0.55"/><rect x="43" y="257" width="7" height="1" fill="#108a10" fill-opacity="0.19"/><rect x="51" y="256" width="11" height="1" fill="#108a10" fill-opacity="0.55"/><rect x="51" y="257" width="11" height="1" fill="#108a10" fill-opacity="0.19"/><rect x="63" y="256" width="6" height="1" fill="#108a10" fill-opacity="0.55"/><rect x="63" y="257" width="6" height="1" fill="#108a10" fill-opacity="0.19"/><rect x="70" y="256" width="6" height="1" fill="#108a10" fill-opacity="0.55"/><rect x="70" y="257" width="6" height="1" fill="#108a10" fill-opacity="0.19"/><rect x="77" y="256" width="2" height="1" fill="#108a10" fill-opacity="0.55"/><rect x="77" y="257" width="2" height="1" fill="#108a10" fill-opacity="0.19"/><rect x="27" y="258" width="2" height="1" fill="#2020ff" fill-opacity="0.60"/><rect x="27" y="259" width="2" height="1" fill="#2020ff" fill-opacity="0.21"/><rect x="27" y="260" width="1" height="1" fill="#202020" fill-opacity="0.60"/><rect x="27" y="261" width="1" height="1" fill="#202020" fill-opacity="0.21"/><rect x="31" y="262" width="3" height="1" fill="#2020ff" fill-opacity="0.60"/><rect x="31" y="263" width="3" height="1" fill="#2020ff" fill-opacity="0.21"/><rect x="35" y="262" width="4" height="1" fill="#202020" fill-opacity="0.60"/><rect x="35" y="263" width="4" height="1" fill="#202020" fill-opacity="0.21"/><rect x="40" y="262" width="5" height="1" fill="#202020" fill-opacity="0.60"/><rect x="40" y="263" width="5" height="1" fill="#202020" fill-opacity="0.21"/><rect x="46" y="262" width="9" height="1" fill="#202020" fill-opacity="0.60"/><rect x="46" y="263" width="9" height="1" fill="#202020" fill-opacity="0.21"/><rect x="56" y="262" width="12" height="1" fill="#202020" fill-opacity="0.60"/><rect x="56" y="263" width="12" height="1" fill="#202020" fill-opacity="0.21"/><rect x="69" y="262" width="3" height="1" fill="#202020" fill-opacity="0.60"/><rect x="69" y="263" width="3" height="1" fill="#202020" fill-opacity="0.21"/><rect x="73" y="262" width="6" height="1" fill="#202020" fill-opacity="0.60"/><rect x="73" y="263" width="6" height="1" fill="#202020" fill-opacity="0.21"/><rect x="3" y="186" width="76" height="2" fill="#d8b46a" fill-opacity="0.9"/></svg><div class="a" style="left:1054px;top:92px;width:1px;height:266px;background:#ececec"></div><div class="a" style="left:1055px;top:115px;width:10px;height:2px;background:#505050"></div><div class="a" style="left:1062px;top:120px;width:3px;height:32px;background:#c0952a"></div><div class="a" style="left:1062px;top:154px;width:3px;height:5px;background:#c0952a"></div><div class="a" style="left:1062px;top:180px;width:3px;height:6px;background:#c0952a"></div><div class="a" style="left:1062px;top:196px;width:3px;height:8px;background:#c0952a"></div><div class="a" style="left:1062px;top:215px;width:3px;height:10px;background:#c0952a"></div><div class="a" style="left:1062px;top:244px;width:3px;height:9px;background:#c0952a"></div><div class="a" style="left:1062px;top:272px;width:3px;height:7px;background:#c0952a"></div><div class="a" style="left:1062px;top:304px;width:3px;height:6px;background:#c0952a"></div><div class="a" style="left:1062px;top:313px;width:3px;height:5px;background:#c0952a"></div><div class="a" style="left:1062px;top:331px;width:3px;height:21px;background:#c0952a"></div>

<!-- ===== panel ===== -->
<div class="a" style="left:309px;top:358px;width:756px;height:1px;background:#e5e5e5"></div>
<div class="a ptab" style="left:329px;color:#424242">TERMINAL</div>
<div class="a" style="left:327px;top:387px;width:55px;height:1px;background:#424242"></div>
<div class="a ptab" style="left:404px">PORTS</div>
<div class="a ptab" style="left:460px">AZURE</div>
<div class="a ptab" style="left:518px">DEBUG CONSOLE</div>
<div class="a ptab" style="left:627px">PROBLEMS</div>
<div class="a" style="left:691px;top:369px;width:22px;height:18px;border-radius:9px;background:#c4c4c4;color:#333;font-size:11px;text-align:center;line-height:18px">32</div>
<div class="a ptab" style="left:735px">OUTPUT</div>
<svg class="a" style="left:890px;top:366px" width="170" height="20">
 <g fill="none" stroke="#424242" stroke-width="1">
  <path d="M11.5 4 V17 M5 10.5 H18"/>
  <path d="M24 9.5 L27.5 12.5 L31 9.5"/>
  <rect x="45.5" y="4.5" width="12" height="12"/><line x1="51.5" y1="4.5" x2="51.5" y2="16.5"/>
  <path d="M70 6.5 H83 M74 6.5 V4.5 H79 V6.5 M71.5 6.5 L72.5 16.5 H80.5 L81.5 6.5 M74.5 8.5 V14.5 M76.5 8.5 V14.5 M78.5 8.5 V14.5"/>
  <path d="M123.5 12.5 L129 7 L134.5 12.5"/>
  <path d="M150.5 6 L159.5 15 M159.5 6 L150.5 15"/>
 </g>
 <g fill="#424242"><circle cx="98" cy="10.8" r="1.1"/><circle cx="103" cy="10.8" r="1.1"/><circle cx="108" cy="10.8" r="1.1"/></g>
</svg>

<!-- ===== status bar ===== -->
<svg class="a" style="left:0;top:534px" width="1065" height="21">
 <g fill="none" stroke="#fff" stroke-width="1.1">
  <path d="M9.8 8.2 L13.2 11.8 L9.8 15.4 M18.5 5 L15 8.6 L18.5 12.2"/>
  <circle cx="41" cy="6" r="2"/><circle cx="48" cy="9" r="2"/><circle cx="41" cy="16" r="2"/>
  <path d="M41 8 V14 M48 11 C48 13 44 13 41 13.5"/>
  <path d="M105.5 14.5 H104 C101.5 14.5 101.3 10.5 103.8 10.3 C104 6.8 110 6.3 111 9.3 C115 9 115.8 14.5 112.5 14.5 H111.5 M108.5 16.5 V11 M106.5 13 L108.5 11 L110.5 13"/>
  <circle cx="136.5" cy="10.5" r="6"/><path d="M134 8 L139 13 M139 8 L134 13"/>
  <path d="M164.1 5.6 L169.8 16 H158.4 Z M164.1 9.3 V12.6 M164.1 13.8 V14.8"/>
  <path d="M210.4 9.5 L207.6 16.8 M210.4 9.5 L213.2 16.8 M208.6 14 H212.2 M207.6 5.5 C206.4 7 206.4 9 207.6 10.5 M213.2 5.5 C214.4 7 214.4 9 213.2 10.5 M205.6 4 C203.8 6.5 203.8 9.5 205.6 12 M215.2 4 C217 6.5 217 9.5 215.2 12"/>
  <circle cx="210.4" cy="8" r="1.2"/>
  <path d="M944.5 4 L950 7 V13.5 L944.5 16.5 L939 13.5 V7 Z"/>
  <circle cx="973.5" cy="10.5" r="5.5"/><line x1="969.5" y1="14.5" x2="977.5" y2="6.5"/>
  <path d="M1043 15 V10 C1043 6.5 1045 5 1047.5 5 C1050 5 1052 6.5 1052 10 V15 H1042 M1046 16.5 H1049"/>
 </g>
 <circle cx="1052" cy="5.5" r="2.2" fill="#fff"/>
 <text x="941.5" y="13" font-size="6" fill="#fff" font-family="Liberation Sans" font-weight="bold">C#</text>
</svg>
<div class="a sb" style="left:55px">master*</div>
<div class="a sb" style="left:148px">0</div>
<div class="a sb" style="left:174px">32</div>
<div class="a sb" style="left:220px">0</div>
<div class="a sb" style="left:243px">Projects: 1</div>
<div class="a sb" style="left:662px">Ln 180, Col 44</div>
<div class="a sb" style="left:752px">Spaces: 4</div>
<div class="a sb" style="left:817px">UTF-8</div>
<div class="a sb" style="left:865px;transform:scaleX(0.9)">CRLF</div>
<div class="a sb" style="left:907px">C#</div>
<div class="a sb" style="left:984px;transform:none">Prettier</div>

<!-- ===== quick input ===== -->
<div class="a" style="left:233.5px;top:6.5px;width:600.5px;height:96.5px;background:#f3f3f3;border-radius:6px;box-shadow:0 0 8px 2px rgba(0,0,0,0.16)"></div>
<div class="a" style="left:234px;top:6.5px;width:599.5px;height:24px;background:#e5e5e5;border-radius:6px 6px 5px 5px"></div>
<svg class="a" style="left:239px;top:12px" width="16" height="16"><path d="M2.5 7.5 H15 M7.5 2.5 L2.5 7.5 L7.5 12.5" fill="none" stroke="#424242" stroke-width="1.1"/></svg>
<div class="a" style="left:447px;top:12px;font-size:13px;color:#616161;line-height:15px">Create new Timer trigger (5/8)</div>
<div class="a" style="left:240px;top:39px;width:588px;height:27px;background:#fff;border:1px solid #0090f1;border-radius:2px"></div>
<div class="a" style="left:246.5px;top:44px;width:79.5px;height:16.5px;background:#2e67d3"></div>
<div class="a" style="left:246.5px;top:46px;font-size:13px;color:#fff;line-height:15px">TimerTrigger1</div>
<div class="a" style="left:245px;top:72px;font-size:13px;color:#616161;line-height:15px">Provide a function name (Press 'Enter' to confirm or 'Escape' to cancel)</div>

</body></html>
